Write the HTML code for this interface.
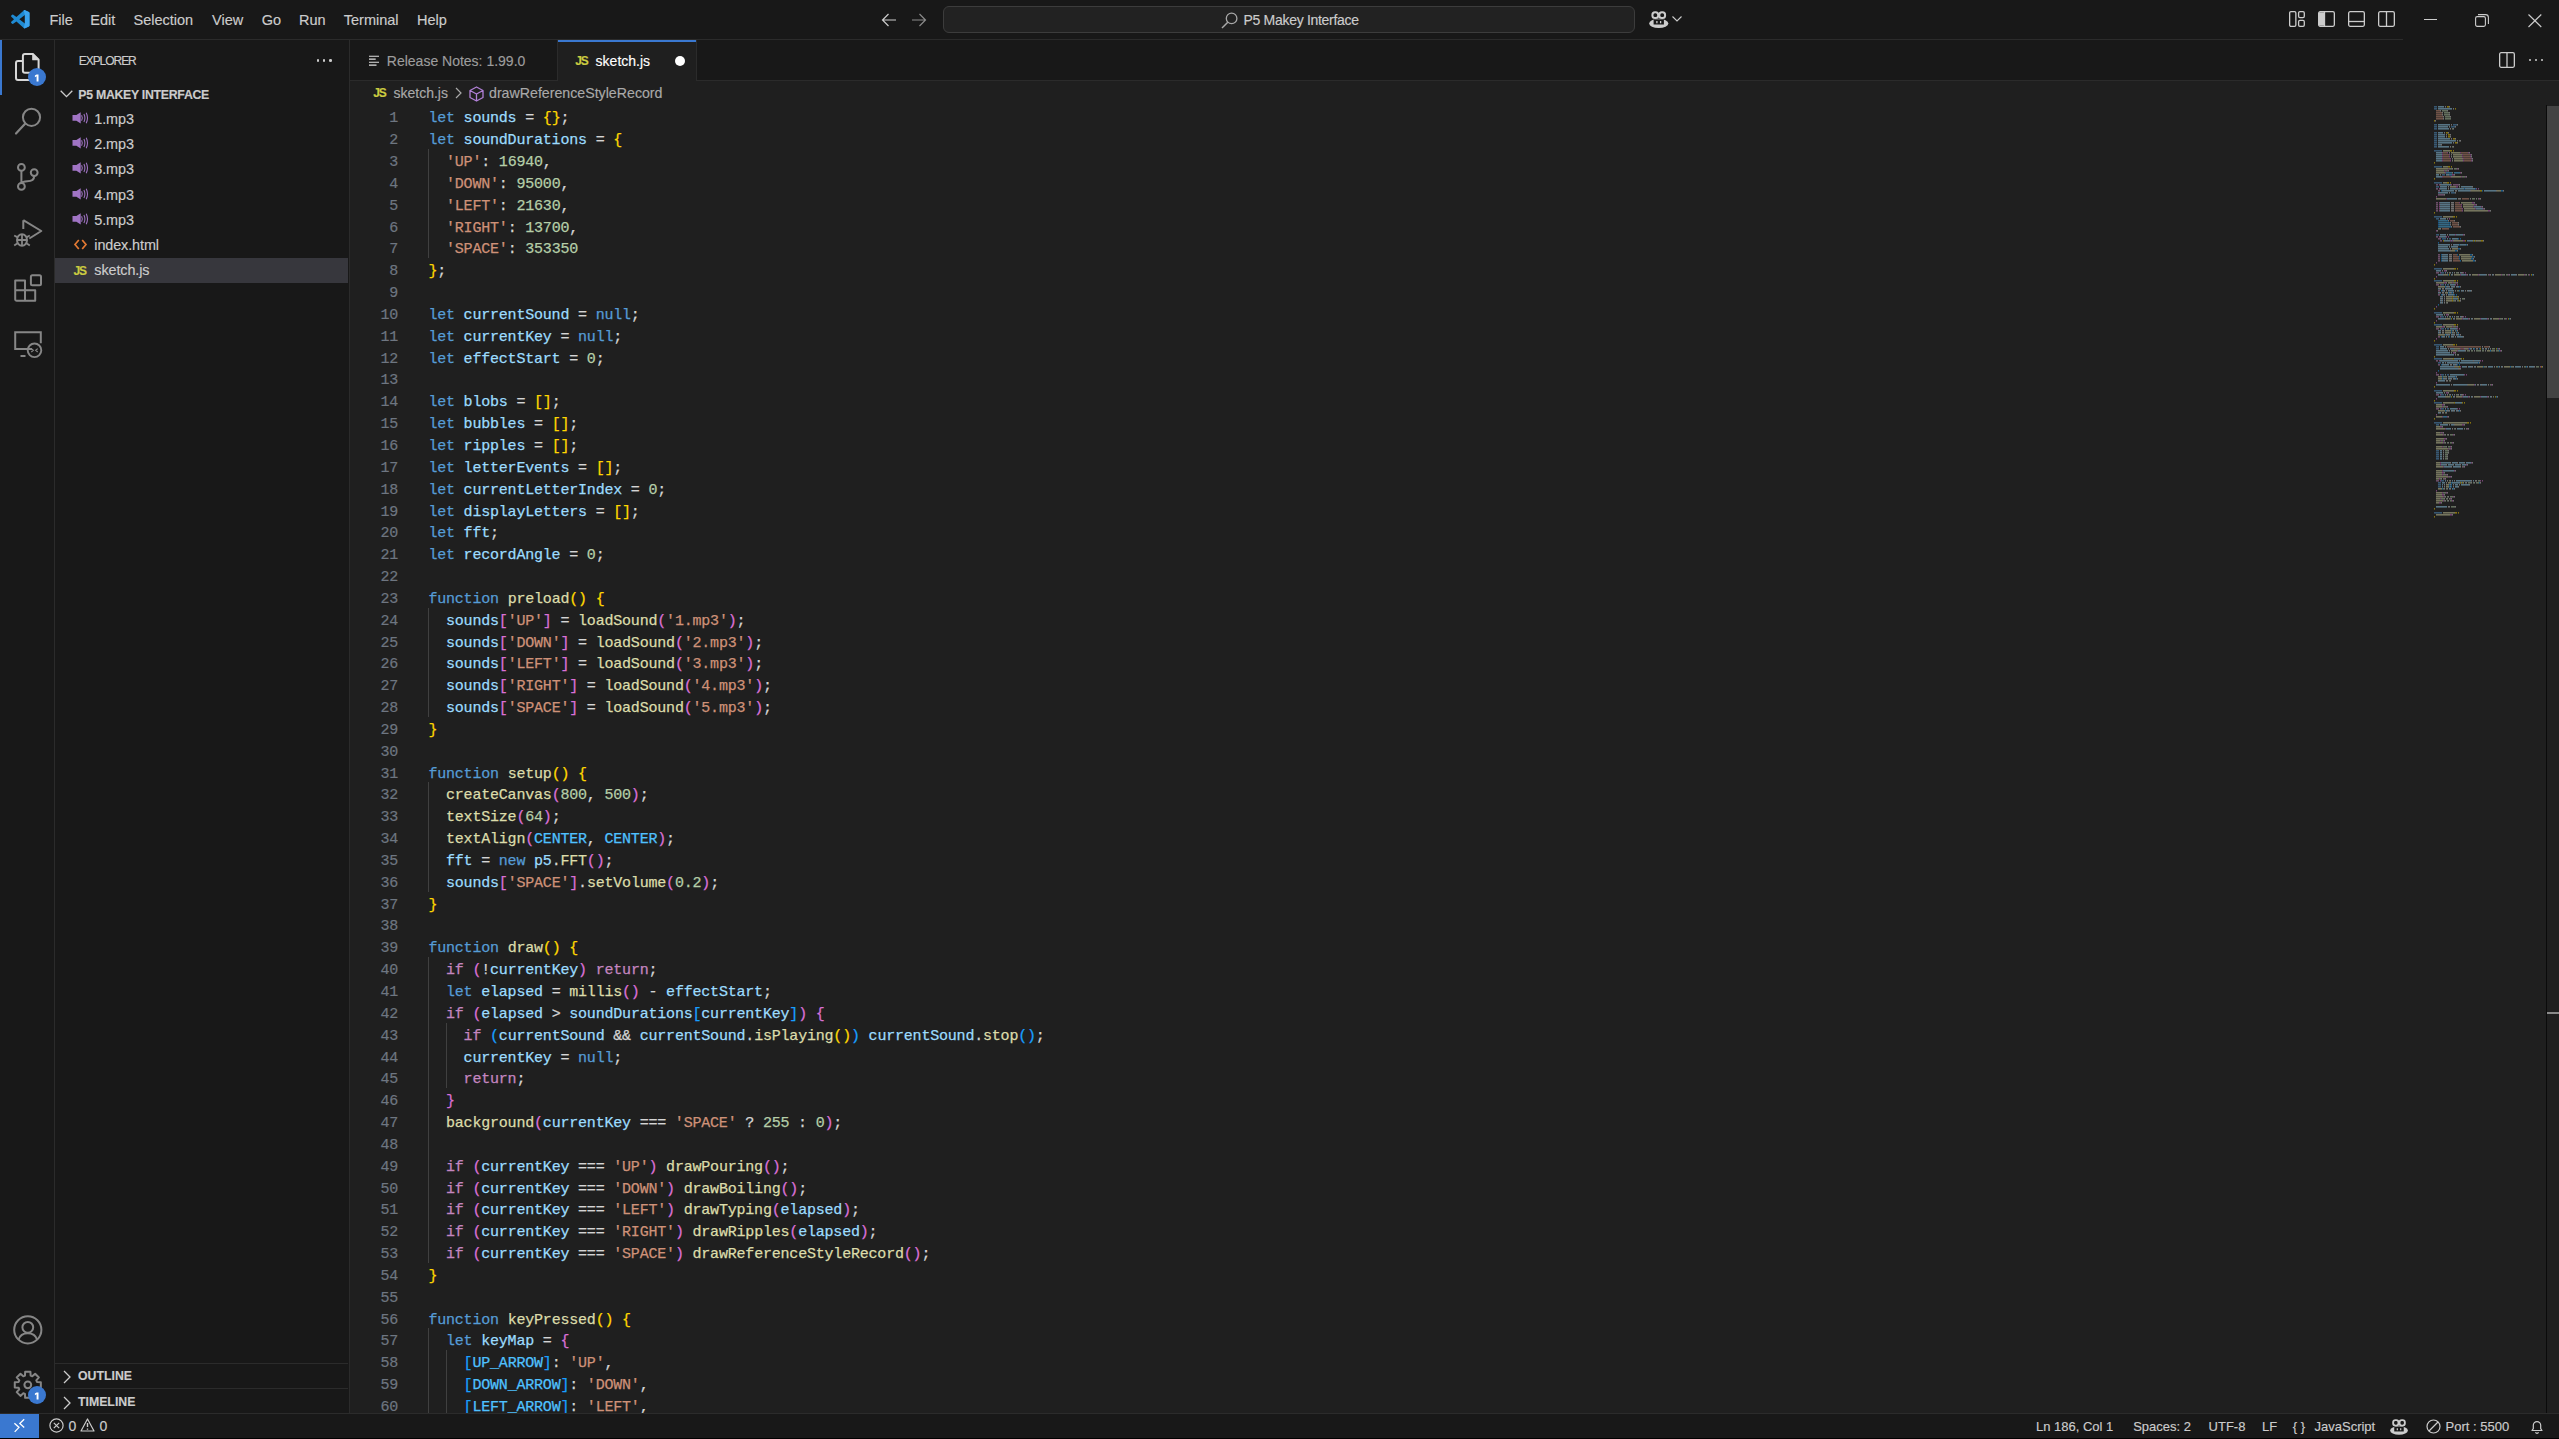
<!DOCTYPE html>
<html><head><meta charset="utf-8">
<style>
*{margin:0;padding:0;box-sizing:border-box}
html,body{width:2559px;height:1439px;overflow:hidden;background:#1f1f1f}
body{position:relative;font-family:"Liberation Sans",sans-serif;color:#cccccc}
.a{position:absolute}
.t{position:absolute;white-space:pre;-webkit-text-stroke:0.15px currentColor}
#titlebar{left:0;top:0;width:2559px;height:40px;background:#181818}
#titlebor{left:0;top:39px;width:2403px;height:1px;background:#2b2b2b}
#activity{left:0;top:40px;width:55px;height:1373px;background:#181818;border-right:1px solid #2b2b2b}
#sidebar{left:55px;top:40px;width:294px;height:1373px;background:#181818}
#sidebor{left:349px;top:40px;width:1px;height:1373px;background:#2b2b2b}
#tabbar{left:350px;top:40px;width:2209px;height:40px;background:#181818}
#tabbor{left:350px;top:80px;width:2209px;height:1px;background:#2b2b2b}
#editor{left:350px;top:81px;width:2209px;height:1332px;background:#1f1f1f}
#status{left:0;top:1413px;width:2559px;height:26px;background:#181818;border-top:1px solid #2b2b2b}
.ln{position:absolute;-webkit-text-stroke:0.2px currentColor;left:350px;width:48px;text-align:right;font-family:"Liberation Mono",monospace;font-size:15px;letter-spacing:-0.2px;line-height:21.84px;height:21.84px;color:#6e7681;white-space:pre}
.cl{position:absolute;left:428.4px;-webkit-text-stroke:0.25px currentColor;font-family:"Liberation Mono",monospace;font-size:15px;letter-spacing:-0.2px;line-height:21.84px;height:21.84px;white-space:pre;color:#d4d4d4}
.k{color:#569cd6}.c{color:#c586c0}.v{color:#9cdcfe}.f{color:#dcdcaa}.s{color:#ce9178}.n{color:#b5cea8}.o{color:#d4d4d4}.K{color:#4fc1ff}
.b1{color:#ffd700}.b2{color:#da70d6}.b3{color:#179fff}
svg{position:absolute;overflow:visible}
</style></head><body>
<div id="titlebar" class="a"></div>
<div id="titlebor" class="a"></div>
<div id="activity" class="a"></div>
<div id="sidebar" class="a"></div>
<div id="sidebor" class="a"></div>
<div id="tabbar" class="a"></div>
<div id="tabbor" class="a"></div>
<div id="editor" class="a"></div>
<div id="status" class="a"></div>
<svg style="left:11.00px;top:10.00px;" width="18.50" height="18.50" viewBox="0 0 100 100"><path fill="#1f8ad2" d="M96.5 10.8L75.9.9c-2.4-1.2-5.2-.7-7.1 1.2L29.4 38.1 12.2 25.1c-1.6-1.2-3.8-1.1-5.3.2l-5.5 5c-1.8 1.7-1.8 4.5 0 6.2L16.3 50 1.4 63.5c-1.8 1.7-1.8 4.5 0 6.2l5.5 5c1.5 1.3 3.7 1.4 5.3.2l17.2-13 39.4 36c1.9 1.9 4.7 2.4 7.1 1.2l20.6-9.9c2.2-1 3.5-3.2 3.5-5.6V16.4c0-2.4-1.4-4.6-3.5-5.6zM75 72.7L45.1 50 75 27.3v45.4z"/><path fill="#3aa3ee" d="M96.5 10.8L75.9.9c-2.4-1.2-5.2-.7-7.1 1.2L68.8 2.1 75 27.3v45.4l-6.2 25.2c1.9 1.9 4.7 2.4 7.1 1.2l20.6-9.9c2.2-1 3.5-3.2 3.5-5.6V16.4c0-2.4-1.4-4.6-3.5-5.6z"/></svg>
<div class="t" style="left:49.50px;top:12.73px;font-size:14.50px;line-height:14.50px;color:#cccccc;font-weight:400;letter-spacing:0.00px;font-family:'Liberation Sans',sans-serif;">File</div>
<div class="t" style="left:90.30px;top:12.73px;font-size:14.50px;line-height:14.50px;color:#cccccc;font-weight:400;letter-spacing:0.00px;font-family:'Liberation Sans',sans-serif;">Edit</div>
<div class="t" style="left:133.50px;top:12.73px;font-size:14.50px;line-height:14.50px;color:#cccccc;font-weight:400;letter-spacing:0.00px;font-family:'Liberation Sans',sans-serif;">Selection</div>
<div class="t" style="left:212.00px;top:12.73px;font-size:14.50px;line-height:14.50px;color:#cccccc;font-weight:400;letter-spacing:0.00px;font-family:'Liberation Sans',sans-serif;">View</div>
<div class="t" style="left:261.80px;top:12.73px;font-size:14.50px;line-height:14.50px;color:#cccccc;font-weight:400;letter-spacing:0.00px;font-family:'Liberation Sans',sans-serif;">Go</div>
<div class="t" style="left:299.00px;top:12.73px;font-size:14.50px;line-height:14.50px;color:#cccccc;font-weight:400;letter-spacing:0.00px;font-family:'Liberation Sans',sans-serif;">Run</div>
<div class="t" style="left:343.80px;top:12.73px;font-size:14.50px;line-height:14.50px;color:#cccccc;font-weight:400;letter-spacing:0.00px;font-family:'Liberation Sans',sans-serif;">Terminal</div>
<div class="t" style="left:417.00px;top:12.73px;font-size:14.50px;line-height:14.50px;color:#cccccc;font-weight:400;letter-spacing:0.00px;font-family:'Liberation Sans',sans-serif;">Help</div>
<svg style="left:881.00px;top:13.00px;" width="16.00" height="14.00" viewBox="0 0 16 14"><path d="M1.5 7H15M7.5 1L1.5 7l6 6" stroke="#cccccc" stroke-width="1.2" fill="none"/></svg>
<svg style="left:911.00px;top:13.00px;" width="16.00" height="14.00" viewBox="0 0 16 14"><path d="M1 7h13.5M8.5 1l6 6-6 6" stroke="#8b8b8b" stroke-width="1.2" fill="none"/></svg>
<div class="a" style="left:943px;top:6px;width:692px;height:27px;border:1px solid #3c3c3c;border-radius:6px;background:#222222"></div>
<svg style="left:1221.00px;top:12.00px;" width="17.00" height="17.00" viewBox="0 0 17 17"><circle cx="10.6" cy="6.4" r="5.3" stroke="#a8a8a8" stroke-width="1.3" fill="none"/><path d="M6.8 10.2L1 16" stroke="#a8a8a8" stroke-width="1.5" fill="none"/></svg>
<div class="t" style="left:1243.50px;top:13.15px;font-size:14.00px;line-height:14.00px;color:#cccccc;font-weight:400;letter-spacing:-0.30px;font-family:'Liberation Sans',sans-serif;">P5 Makey Interface</div>
<svg style="left:1648.50px;top:10.50px;" width="19.50" height="17.00" viewBox="0 0 19.5 17"><ellipse cx="9.75" cy="12.4" rx="9.6" ry="4.6" fill="#cccccc"/><rect x="4.6" y="8.3" width="10.3" height="5.2" fill="#181818"/><path d="M7.9 10v2.3M11.6 10v2.3" stroke="#cccccc" stroke-width="1.3"/><rect x="3.4" y="1.3" width="5.8" height="5.8" rx="2.6" stroke="#cccccc" stroke-width="2" fill="none"/><rect x="10.3" y="1.3" width="5.8" height="5.8" rx="2.6" stroke="#cccccc" stroke-width="2" fill="none"/></svg>
<svg style="left:1672.00px;top:16.00px;" width="10.00" height="6.00" viewBox="0 0 10 6"><path d="M.5.5L5 5 9.5.5" stroke="#cccccc" stroke-width="1.1" fill="none"/></svg>
<svg style="left:2289.00px;top:11.00px;" width="16.00" height="16.00" viewBox="0 0 16 16"><rect x="0.65" y="0.65" width="6.2" height="14.7" rx="1.3" stroke="#cccccc" stroke-width="1.3" fill="none"/><rect x="9.6" y="0.65" width="5.7" height="5.9" rx="1.3" stroke="#cccccc" stroke-width="1.3" fill="none"/><rect x="9.6" y="9.45" width="5.7" height="5.9" rx="1.3" stroke="#cccccc" stroke-width="1.3" fill="none"/></svg>
<svg style="left:2318.00px;top:11.00px;" width="17.00" height="16.00" viewBox="0 0 17 16"><rect x="0.65" y="0.65" width="15.7" height="14.7" rx="1.5" stroke="#cccccc" stroke-width="1.3" fill="none"/><path d="M1 1.3h5.5v13.4H1z" fill="#cccccc"/><path d="M6.5 1v14" stroke="#cccccc" stroke-width="1.3"/></svg>
<svg style="left:2348.00px;top:11.00px;" width="17.00" height="16.00" viewBox="0 0 17 16"><rect x="0.65" y="0.65" width="15.7" height="14.7" rx="1.5" stroke="#cccccc" stroke-width="1.3" fill="none"/><path d="M1 10.5h15" stroke="#cccccc" stroke-width="1.3"/></svg>
<svg style="left:2378.00px;top:11.00px;" width="17.00" height="16.00" viewBox="0 0 17 16"><rect x="0.65" y="0.65" width="15.7" height="14.7" rx="1.5" stroke="#cccccc" stroke-width="1.3" fill="none"/><path d="M8.5 1v14" stroke="#cccccc" stroke-width="1.3"/></svg>
<div class="a" style="left:2424.00px;top:19.00px;width:12.50px;height:1.20px;background:#cccccc;"></div>
<svg style="left:2475.00px;top:14.00px;" width="14.00" height="13.00" viewBox="0 0 14 13"><rect x="0.6" y="2.6" width="9.8" height="9.8" rx="1.6" stroke="#cccccc" stroke-width="1.1" fill="none"/><path d="M3 .6h7.5a2.9 2.9 0 0 1 2.9 2.9V10" stroke="#cccccc" stroke-width="1.1" fill="none"/></svg>
<svg style="left:2528.00px;top:13.50px;" width="14.00" height="13.00" viewBox="0 0 14 13"><path d="M.5.5l12.8 12.5M13.3.5L.5 13" stroke="#cccccc" stroke-width="1.15" fill="none"/></svg>
<div class="a" style="left:0.00px;top:40.00px;width:2.00px;height:55.00px;background:#3a78d0;"></div>
<svg style="left:14.00px;top:52.00px;" width="28.00" height="30.00" viewBox="0 0 28 30"><path d="M10.9 1.9H18.8L24.6 7.7V18.75A2 2 0 0 1 22.6 20.75H10.9A2 2 0 0 1 8.9 18.75V3.9A2 2 0 0 1 10.9 1.9z" stroke="#d7d7d7" stroke-width="2" fill="none" stroke-linejoin="round"/><path d="M18.8 2v5.7h5.7z" fill="#d7d7d7" stroke="#d7d7d7" stroke-width="1.2" stroke-linejoin="round"/><path d="M8.9 9H4A2 2 0 0 0 2 11V26A2 2 0 0 0 4 28H17" stroke="#d7d7d7" stroke-width="2" fill="none" stroke-linejoin="round"/></svg>
<div class="a" style="left:28.1px;top:68.1px;width:18px;height:18px;border-radius:50%;background:#3a78d0"></div>
<svg style="left:34.00px;top:74.00px;" width="6.00" height="8.00" viewBox="0 0 6 8"><path d="M2.6 .6h1.9v6.9H2.6V2.3L.9 3.2V1.6z" fill="#ffffff"/></svg>
<svg style="left:14.00px;top:106.00px;" width="30.00" height="31.00" viewBox="0 0 30 31"><circle cx="17.5" cy="11.3" r="8.6" stroke="#868686" stroke-width="2" fill="none"/><path d="M11.3 17.6L2 27.5" stroke="#868686" stroke-width="2.2" fill="none" stroke-linecap="round"/></svg>
<svg style="left:14.00px;top:161.00px;" width="28.00" height="32.00" viewBox="0 0 28 32"><circle cx="7.4" cy="6.4" r="3.4" stroke="#868686" stroke-width="2" fill="none"/><circle cx="7.4" cy="25.4" r="3.4" stroke="#868686" stroke-width="2" fill="none"/><circle cx="20.2" cy="11.6" r="3.4" stroke="#868686" stroke-width="2" fill="none"/><path d="M7.4 9.8v12.2M20.2 15c0 4-3 5.2-7 5.2-3 0-5 .8-5.8 2.3" stroke="#868686" stroke-width="2" fill="none"/></svg>
<svg style="left:13.00px;top:218.00px;" width="30.00" height="30.00" viewBox="0 0 30 30"><path d="M10.3 2.2v8.7M10.3 2.2L28.3 13l-12 7.5" stroke="#868686" stroke-width="2" fill="none" stroke-linejoin="round"/><ellipse cx="9" cy="22" rx="5" ry="5.8" stroke="#868686" stroke-width="2" fill="none"/><path d="M4 22h10M1.2 17.5l3 1.6M16.8 17.5l-3 1.6M1.2 27.5l3-2M16.8 27.5l-3-2M9 16.5v11" stroke="#868686" stroke-width="1.8" fill="none"/></svg>
<svg style="left:13.00px;top:273.00px;" width="30.00" height="30.00" viewBox="0 0 30 30"><rect x="17.9" y="2.3" width="10.1" height="10" rx="1.5" stroke="#868686" stroke-width="2" fill="none"/><path d="M2.2 7.6h9.8v9.7h10.2v10.4H3.7a1.5 1.5 0 0 1-1.5-1.5z" stroke="#868686" stroke-width="2" fill="none" stroke-linejoin="round"/><path d="M2.2 17.3H12v10.4" stroke="#868686" stroke-width="2" fill="none"/></svg>
<svg style="left:13.00px;top:330.00px;" width="30.00" height="29.00" viewBox="0 0 30 29"><path d="M19 19H2.2V2.3h25.6v11" stroke="#868686" stroke-width="2" fill="none"/><path d="M7.5 26h5" stroke="#868686" stroke-width="2"/><circle cx="21.5" cy="20.3" r="6.8" stroke="#868686" stroke-width="1.9" fill="none"/><path d="M18.3 18.6l2 1.7-2 1.7M24.7 18.6l-2 1.7 2 1.7" stroke="#868686" stroke-width="1.2" fill="none"/></svg>
<svg style="left:13.00px;top:1315.00px;" width="30.00" height="30.00" viewBox="0 0 30 30"><circle cx="14.8" cy="14.8" r="13.6" stroke="#868686" stroke-width="2" fill="none"/><circle cx="14.8" cy="12.3" r="5.4" stroke="#868686" stroke-width="2" fill="none"/><path d="M5.5 24.8c1.3-4.3 5-6.5 9.3-6.5s8 2.2 9.3 6.5" stroke="#868686" stroke-width="2" fill="none"/></svg>
<svg style="left:13.00px;top:1370.00px;" width="30.00" height="30.00" viewBox="0 0 30 30"><path d="M27.83 12.16 L27.83 17.44 L23.97 17.64 L23.29 19.28 L25.89 22.15 L22.15 25.89 L19.28 23.29 L17.64 23.97 L17.44 27.83 L12.16 27.83 L11.96 23.97 L10.32 23.29 L7.45 25.89 L3.71 22.15 L6.31 19.28 L5.63 17.64 L1.77 17.44 L1.77 12.16 L5.63 11.96 L6.31 10.32 L3.71 7.45 L7.45 3.71 L10.32 6.31 L11.96 5.63 L12.16 1.77 L17.44 1.77 L17.64 5.63 L19.28 6.31 L22.15 3.71 L25.89 7.45 L23.29 10.32 L23.97 11.96Z" stroke="#868686" stroke-width="2" fill="none" stroke-linejoin="round"/><circle cx="14.8" cy="14.8" r="3.4" stroke="#868686" stroke-width="2" fill="none"/></svg>
<div class="a" style="left:28px;top:1386px;width:18px;height:18px;border-radius:50%;background:#3a78d0"></div>
<svg style="left:33.80px;top:1392.00px;" width="6.00" height="8.00" viewBox="0 0 6 8"><path d="M2.6 .6h1.9v6.9H2.6V2.3L.9 3.2V1.6z" fill="#ffffff"/></svg>
<div class="t" style="left:78.75px;top:54.84px;font-size:12.00px;line-height:12.00px;color:#cccccc;font-weight:400;letter-spacing:-1.05px;font-family:'Liberation Sans',sans-serif;">EXPLORER</div>
<div class="a" style="left:316.5px;top:59px;width:2.6px;height:2.6px;border-radius:50%;background:#cccccc"></div>
<div class="a" style="left:322.8px;top:59px;width:2.6px;height:2.6px;border-radius:50%;background:#cccccc"></div>
<div class="a" style="left:329.1px;top:59px;width:2.6px;height:2.6px;border-radius:50%;background:#cccccc"></div>
<svg style="left:60.00px;top:89.50px;" width="13.00" height="8.00" viewBox="0 0 13 8"><path d="M.7.7L6.5 6.6 12.3.7" stroke="#cccccc" stroke-width="1.3" fill="none"/></svg>
<div class="t" style="left:78.30px;top:88.59px;font-size:12.30px;line-height:12.30px;color:#cccccc;font-weight:700;letter-spacing:-0.28px;font-family:'Liberation Sans',sans-serif;">P5 MAKEY INTERFACE</div>
<div class="a" style="left:55.00px;top:258.00px;width:293.00px;height:25.00px;background:#37373d;"></div>
<div class="t" style="left:94.30px;top:112.01px;font-size:14.40px;line-height:14.40px;color:#cccccc;font-weight:400;letter-spacing:-0.10px;font-family:'Liberation Sans',sans-serif;">1.mp3</div>
<svg style="left:66.00px;top:105.00px;" width="34.00" height="26.00" viewBox="0 0 34 26"><path d="M6.5 10.1h3.9l4.3-2.9v11.4l-4.3-2.9H6.5z" fill="#a074c4"/><path d="M15.6 10.3q1.4 2.7 0 5.4M17.9 9q2 4 0 8M20.2 7.8q2.6 5.2 0 10.4" stroke="#a074c4" stroke-width="1.05" fill="none"/></svg>
<div class="t" style="left:94.30px;top:137.21px;font-size:14.40px;line-height:14.40px;color:#cccccc;font-weight:400;letter-spacing:-0.10px;font-family:'Liberation Sans',sans-serif;">2.mp3</div>
<svg style="left:66.00px;top:130.20px;" width="34.00" height="26.00" viewBox="0 0 34 26"><path d="M6.5 10.1h3.9l4.3-2.9v11.4l-4.3-2.9H6.5z" fill="#a074c4"/><path d="M15.6 10.3q1.4 2.7 0 5.4M17.9 9q2 4 0 8M20.2 7.8q2.6 5.2 0 10.4" stroke="#a074c4" stroke-width="1.05" fill="none"/></svg>
<div class="t" style="left:94.30px;top:162.41px;font-size:14.40px;line-height:14.40px;color:#cccccc;font-weight:400;letter-spacing:-0.10px;font-family:'Liberation Sans',sans-serif;">3.mp3</div>
<svg style="left:66.00px;top:155.40px;" width="34.00" height="26.00" viewBox="0 0 34 26"><path d="M6.5 10.1h3.9l4.3-2.9v11.4l-4.3-2.9H6.5z" fill="#a074c4"/><path d="M15.6 10.3q1.4 2.7 0 5.4M17.9 9q2 4 0 8M20.2 7.8q2.6 5.2 0 10.4" stroke="#a074c4" stroke-width="1.05" fill="none"/></svg>
<div class="t" style="left:94.30px;top:187.61px;font-size:14.40px;line-height:14.40px;color:#cccccc;font-weight:400;letter-spacing:-0.10px;font-family:'Liberation Sans',sans-serif;">4.mp3</div>
<svg style="left:66.00px;top:180.60px;" width="34.00" height="26.00" viewBox="0 0 34 26"><path d="M6.5 10.1h3.9l4.3-2.9v11.4l-4.3-2.9H6.5z" fill="#a074c4"/><path d="M15.6 10.3q1.4 2.7 0 5.4M17.9 9q2 4 0 8M20.2 7.8q2.6 5.2 0 10.4" stroke="#a074c4" stroke-width="1.05" fill="none"/></svg>
<div class="t" style="left:94.30px;top:212.81px;font-size:14.40px;line-height:14.40px;color:#cccccc;font-weight:400;letter-spacing:-0.10px;font-family:'Liberation Sans',sans-serif;">5.mp3</div>
<svg style="left:66.00px;top:205.80px;" width="34.00" height="26.00" viewBox="0 0 34 26"><path d="M6.5 10.1h3.9l4.3-2.9v11.4l-4.3-2.9H6.5z" fill="#a074c4"/><path d="M15.6 10.3q1.4 2.7 0 5.4M17.9 9q2 4 0 8M20.2 7.8q2.6 5.2 0 10.4" stroke="#a074c4" stroke-width="1.05" fill="none"/></svg>
<div class="t" style="left:94.30px;top:238.01px;font-size:14.40px;line-height:14.40px;color:#cccccc;font-weight:400;letter-spacing:-0.10px;font-family:'Liberation Sans',sans-serif;">index.html</div>
<svg style="left:74.00px;top:239.20px;" width="13.00" height="11.00" viewBox="0 0 13 11"><path d="M4.8 1L1 5.5 4.8 10M8.2 1L12 5.5 8.2 10" stroke="#e37933" stroke-width="1.7" fill="none"/></svg>
<div class="t" style="left:94.30px;top:263.21px;font-size:14.40px;line-height:14.40px;color:#cccccc;font-weight:400;letter-spacing:-0.10px;font-family:'Liberation Sans',sans-serif;">sketch.js</div>
<div class="t" style="left:73.60px;top:264.84px;font-size:12.00px;line-height:12.00px;color:#cbcb41;font-weight:700;letter-spacing:-1.20px;font-family:'Liberation Sans',sans-serif;">JS</div>
<div class="a" style="left:55.00px;top:1363.00px;width:293.00px;height:1.00px;background:#2b2b2b;"></div>
<svg style="left:63.00px;top:1370.00px;" width="8.00" height="14.00" viewBox="0 0 8 14"><path d="M1 1l6 6-6 6" stroke="#cccccc" stroke-width="1.3" fill="none"/></svg>
<div class="t" style="left:78.00px;top:1370.09px;font-size:12.30px;line-height:12.30px;color:#cccccc;font-weight:700;letter-spacing:0.00px;font-family:'Liberation Sans',sans-serif;">OUTLINE</div>
<div class="a" style="left:55.00px;top:1388.00px;width:293.00px;height:1.00px;background:#2b2b2b;"></div>
<svg style="left:63.00px;top:1396.00px;" width="8.00" height="14.00" viewBox="0 0 8 14"><path d="M1 1l6 6-6 6" stroke="#cccccc" stroke-width="1.3" fill="none"/></svg>
<div class="t" style="left:78.00px;top:1395.89px;font-size:12.30px;line-height:12.30px;color:#cccccc;font-weight:700;letter-spacing:0.00px;font-family:'Liberation Sans',sans-serif;">TIMELINE</div>
<svg style="left:368.50px;top:54.50px;" width="11.00" height="11.00" viewBox="0 0 11 11"><path d="M0 1.2h10M0 4.1h6.7M0 7.2h10M0 10.1h7.5" stroke="#e0e0e0" stroke-width="1.1"/></svg>
<div class="t" style="left:386.80px;top:54.15px;font-size:14.00px;line-height:14.00px;color:#9d9d9d;font-weight:400;letter-spacing:0.00px;font-family:'Liberation Sans',sans-serif;">Release Notes: 1.99.0</div>
<div class="a" style="left:557.50px;top:40.00px;width:138.00px;height:41.00px;background:#1f1f1f;"></div>
<div class="a" style="left:557.50px;top:40.00px;width:138.00px;height:1.50px;background:#3a78d0;"></div>
<div class="a" style="left:695.50px;top:40.00px;width:1.00px;height:40.00px;background:#2b2b2b;"></div>
<div class="a" style="left:557.00px;top:40.00px;width:1.00px;height:40.00px;background:#2b2b2b;"></div>
<div class="t" style="left:575.30px;top:54.64px;font-size:12.00px;line-height:12.00px;color:#cbcb41;font-weight:700;letter-spacing:-1.20px;font-family:'Liberation Sans',sans-serif;">JS</div>
<div class="t" style="left:595.60px;top:54.15px;font-size:14.00px;line-height:14.00px;color:#ffffff;font-weight:400;letter-spacing:0.00px;font-family:'Liberation Sans',sans-serif;">sketch.js</div>
<div class="a" style="left:674.5px;top:55.5px;width:10px;height:10px;border-radius:50%;background:#ffffff"></div>
<svg style="left:2498.50px;top:51.50px;" width="16.00" height="16.00" viewBox="0 0 16 16"><rect x="0.65" y="0.65" width="14.7" height="14.7" rx="1.5" stroke="#cccccc" stroke-width="1.3" fill="none"/><path d="M8 1v14" stroke="#cccccc" stroke-width="1.3"/></svg>
<div class="a" style="left:2528.5px;top:58.6px;width:2.6px;height:2.6px;border-radius:50%;background:#cccccc"></div>
<div class="a" style="left:2534.5px;top:58.6px;width:2.6px;height:2.6px;border-radius:50%;background:#cccccc"></div>
<div class="a" style="left:2540.5px;top:58.6px;width:2.6px;height:2.6px;border-radius:50%;background:#cccccc"></div>
<div class="t" style="left:373.20px;top:87.44px;font-size:12.00px;line-height:12.00px;color:#cbcb41;font-weight:700;letter-spacing:-1.20px;font-family:'Liberation Sans',sans-serif;">JS</div>
<div class="t" style="left:393.50px;top:86.35px;font-size:14.00px;line-height:14.00px;color:#a9a9a9;font-weight:400;letter-spacing:0.00px;font-family:'Liberation Sans',sans-serif;">sketch.js</div>
<svg style="left:455.00px;top:86.50px;" width="7.00" height="12.00" viewBox="0 0 7 12"><path d="M1 1l5 5-5 5" stroke="#a9a9a9" stroke-width="1.2" fill="none"/></svg>
<svg style="left:469.00px;top:85.50px;" width="15.00" height="16.00" viewBox="0 0 15 16"><path d="M7.5 1L14 4.5v7L7.5 15 1 11.5v-7z M1 4.5L7.5 8 14 4.5M7.5 8v7" stroke="#b180d7" stroke-width="1.3" fill="none" stroke-linejoin="round"/></svg>
<div class="t" style="left:489.00px;top:86.18px;font-size:14.20px;line-height:14.20px;color:#a9a9a9;font-weight:400;letter-spacing:0.00px;font-family:'Liberation Sans',sans-serif;">drawReferenceStyleRecord</div>
<div class="a" style="left:0.00px;top:1414.00px;width:39.00px;height:25.00px;background:#3a78d0;"></div>
<svg style="left:0.00px;top:1408.00px;" width="40.00" height="31.00" viewBox="0 0 40 31"><path d="M14.4 15.3l4.6 4.1-4.3 4.5M24.2 11.2l-4.4 4.3 4.4 4.1" stroke="#ffffff" stroke-width="1.3" fill="none"/></svg>
<svg style="left:48.50px;top:1418.00px;" width="15.00" height="15.00" viewBox="0 0 15 15"><circle cx="7.5" cy="7.5" r="6.6" stroke="#cccccc" stroke-width="1.2" fill="none"/><path d="M4.8 4.8l5.4 5.4M10.2 4.8l-5.4 5.4" stroke="#cccccc" stroke-width="1.2"/></svg>
<div class="t" style="left:68.50px;top:1419.15px;font-size:14.00px;line-height:14.00px;color:#cccccc;font-weight:400;letter-spacing:-0.50px;font-family:'Liberation Sans',sans-serif;">0</div>
<svg style="left:80.00px;top:1418.00px;" width="15.00" height="14.00" viewBox="0 0 15 14"><path d="M7.5 1L14 13H1z" stroke="#cccccc" stroke-width="1.2" fill="none" stroke-linejoin="round"/><path d="M7.5 5v4M7.5 10.5v1.3" stroke="#cccccc" stroke-width="1.4"/></svg>
<div class="t" style="left:99.40px;top:1419.15px;font-size:14.00px;line-height:14.00px;color:#cccccc;font-weight:400;letter-spacing:-0.50px;font-family:'Liberation Sans',sans-serif;">0</div>
<div class="t" style="left:2036.00px;top:1420.00px;font-size:13.00px;line-height:13.00px;color:#cccccc;font-weight:400;letter-spacing:0.00px;font-family:'Liberation Sans',sans-serif;">Ln 186, Col 1</div>
<div class="t" style="left:2133.20px;top:1420.00px;font-size:13.00px;line-height:13.00px;color:#cccccc;font-weight:400;letter-spacing:0.00px;font-family:'Liberation Sans',sans-serif;">Spaces: 2</div>
<div class="t" style="left:2208.60px;top:1420.00px;font-size:13.00px;line-height:13.00px;color:#cccccc;font-weight:400;letter-spacing:0.00px;font-family:'Liberation Sans',sans-serif;">UTF-8</div>
<div class="t" style="left:2262.00px;top:1420.00px;font-size:13.00px;line-height:13.00px;color:#cccccc;font-weight:400;letter-spacing:0.00px;font-family:'Liberation Sans',sans-serif;">LF</div>
<div class="t" style="left:2292.70px;top:1420.00px;font-size:13.00px;line-height:13.00px;color:#cccccc;font-weight:400;letter-spacing:0.00px;font-family:'Liberation Sans',sans-serif;">{ }</div>
<div class="t" style="left:2314.50px;top:1420.00px;font-size:13.00px;line-height:13.00px;color:#cccccc;font-weight:400;letter-spacing:0.00px;font-family:'Liberation Sans',sans-serif;">JavaScript</div>
<div class="t" style="left:2445.60px;top:1420.00px;font-size:13.00px;line-height:13.00px;color:#cccccc;font-weight:400;letter-spacing:0.00px;font-family:'Liberation Sans',sans-serif;">Port : 5500</div>
<svg style="left:2389.50px;top:1418.50px;" width="18.00" height="15.70" viewBox="0 0 19.5 17"><ellipse cx="9.75" cy="12.4" rx="9.6" ry="4.6" fill="#cccccc"/><rect x="4.6" y="8.3" width="10.3" height="5.2" fill="#181818"/><path d="M7.9 10v2.3M11.6 10v2.3" stroke="#cccccc" stroke-width="1.3"/><rect x="3.4" y="1.3" width="5.8" height="5.8" rx="2.6" stroke="#cccccc" stroke-width="2" fill="none"/><rect x="10.3" y="1.3" width="5.8" height="5.8" rx="2.6" stroke="#cccccc" stroke-width="2" fill="none"/></svg>
<svg style="left:2425.50px;top:1419.00px;" width="15.00" height="15.00" viewBox="0 0 15 15"><circle cx="7.5" cy="7.5" r="6.5" stroke="#cccccc" stroke-width="1.2" fill="none"/><path d="M3 12L12 3" stroke="#cccccc" stroke-width="1.2"/></svg>
<svg style="left:2530.00px;top:1418.50px;" width="14.00" height="15.00" viewBox="0 0 14 15"><path d="M2 11.5h10l-1.3-1.8V6.3a3.7 3.7 0 0 0-7.4 0v3.4L2 11.5z" stroke="#cccccc" stroke-width="1.2" fill="none" stroke-linejoin="round"/><path d="M5.5 13.3a1.6 1.6 0 0 0 3 0" stroke="#cccccc" stroke-width="1.2" fill="none"/></svg>
<div class="a" style="left:2546.00px;top:105.00px;width:1.00px;height:1308.00px;background:#0b0b0b;"></div>
<div class="a" style="left:2547.00px;top:106.00px;width:12.00px;height:291.50px;background:#434343;"></div>
<div class="a" style="left:2547.00px;top:1011.80px;width:12.00px;height:2.00px;background:#8a8a8a;"></div>
<div class="a" style="left:0.00px;top:1438.00px;width:2559.00px;height:1.00px;background:#000000;"></div>
<svg style="left:0;top:0" width="2559" height="1439"><g opacity="0.45"><rect x="2434" y="106.0" width="3" height="1.6" fill="#569cd6"/><rect x="2438" y="106.0" width="6" height="1.6" fill="#9cdcfe"/><rect x="2445" y="106.0" width="1" height="1.6" fill="#d4d4d4"/><rect x="2447" y="106.0" width="2" height="1.6" fill="#ffd700"/><rect x="2449" y="106.0" width="1" height="1.6" fill="#d4d4d4"/><rect x="2434" y="108.0" width="3" height="1.6" fill="#569cd6"/><rect x="2438" y="108.0" width="14" height="1.6" fill="#9cdcfe"/><rect x="2453" y="108.0" width="1" height="1.6" fill="#d4d4d4"/><rect x="2455" y="108.0" width="1" height="1.6" fill="#ffd700"/><rect x="2436" y="110.0" width="4" height="1.6" fill="#ce9178"/><rect x="2440" y="110.0" width="1" height="1.6" fill="#d4d4d4"/><rect x="2442" y="110.0" width="5" height="1.6" fill="#b5cea8"/><rect x="2447" y="110.0" width="1" height="1.6" fill="#d4d4d4"/><rect x="2436" y="112.0" width="6" height="1.6" fill="#ce9178"/><rect x="2442" y="112.0" width="1" height="1.6" fill="#d4d4d4"/><rect x="2444" y="112.0" width="5" height="1.6" fill="#b5cea8"/><rect x="2449" y="112.0" width="1" height="1.6" fill="#d4d4d4"/><rect x="2436" y="114.0" width="6" height="1.6" fill="#ce9178"/><rect x="2442" y="114.0" width="1" height="1.6" fill="#d4d4d4"/><rect x="2444" y="114.0" width="5" height="1.6" fill="#b5cea8"/><rect x="2449" y="114.0" width="1" height="1.6" fill="#d4d4d4"/><rect x="2436" y="116.0" width="7" height="1.6" fill="#ce9178"/><rect x="2443" y="116.0" width="1" height="1.6" fill="#d4d4d4"/><rect x="2445" y="116.0" width="5" height="1.6" fill="#b5cea8"/><rect x="2450" y="116.0" width="1" height="1.6" fill="#d4d4d4"/><rect x="2436" y="118.0" width="7" height="1.6" fill="#ce9178"/><rect x="2443" y="118.0" width="1" height="1.6" fill="#d4d4d4"/><rect x="2445" y="118.0" width="6" height="1.6" fill="#b5cea8"/><rect x="2434" y="120.0" width="1" height="1.6" fill="#ffd700"/><rect x="2435" y="120.0" width="1" height="1.6" fill="#d4d4d4"/><rect x="2434" y="124.0" width="3" height="1.6" fill="#569cd6"/><rect x="2438" y="124.0" width="12" height="1.6" fill="#9cdcfe"/><rect x="2451" y="124.0" width="1" height="1.6" fill="#d4d4d4"/><rect x="2453" y="124.0" width="4" height="1.6" fill="#569cd6"/><rect x="2457" y="124.0" width="1" height="1.6" fill="#d4d4d4"/><rect x="2434" y="126.0" width="3" height="1.6" fill="#569cd6"/><rect x="2438" y="126.0" width="10" height="1.6" fill="#9cdcfe"/><rect x="2449" y="126.0" width="1" height="1.6" fill="#d4d4d4"/><rect x="2451" y="126.0" width="4" height="1.6" fill="#569cd6"/><rect x="2455" y="126.0" width="1" height="1.6" fill="#d4d4d4"/><rect x="2434" y="128.0" width="3" height="1.6" fill="#569cd6"/><rect x="2438" y="128.0" width="11" height="1.6" fill="#9cdcfe"/><rect x="2450" y="128.0" width="1" height="1.6" fill="#d4d4d4"/><rect x="2452" y="128.0" width="1" height="1.6" fill="#b5cea8"/><rect x="2453" y="128.0" width="1" height="1.6" fill="#d4d4d4"/><rect x="2434" y="132.0" width="3" height="1.6" fill="#569cd6"/><rect x="2438" y="132.0" width="5" height="1.6" fill="#9cdcfe"/><rect x="2444" y="132.0" width="1" height="1.6" fill="#d4d4d4"/><rect x="2446" y="132.0" width="2" height="1.6" fill="#ffd700"/><rect x="2448" y="132.0" width="1" height="1.6" fill="#d4d4d4"/><rect x="2434" y="134.0" width="3" height="1.6" fill="#569cd6"/><rect x="2438" y="134.0" width="7" height="1.6" fill="#9cdcfe"/><rect x="2446" y="134.0" width="1" height="1.6" fill="#d4d4d4"/><rect x="2448" y="134.0" width="2" height="1.6" fill="#ffd700"/><rect x="2450" y="134.0" width="1" height="1.6" fill="#d4d4d4"/><rect x="2434" y="136.0" width="3" height="1.6" fill="#569cd6"/><rect x="2438" y="136.0" width="7" height="1.6" fill="#9cdcfe"/><rect x="2446" y="136.0" width="1" height="1.6" fill="#d4d4d4"/><rect x="2448" y="136.0" width="2" height="1.6" fill="#ffd700"/><rect x="2450" y="136.0" width="1" height="1.6" fill="#d4d4d4"/><rect x="2434" y="138.0" width="3" height="1.6" fill="#569cd6"/><rect x="2438" y="138.0" width="12" height="1.6" fill="#9cdcfe"/><rect x="2451" y="138.0" width="1" height="1.6" fill="#d4d4d4"/><rect x="2453" y="138.0" width="2" height="1.6" fill="#ffd700"/><rect x="2455" y="138.0" width="1" height="1.6" fill="#d4d4d4"/><rect x="2434" y="140.0" width="3" height="1.6" fill="#569cd6"/><rect x="2438" y="140.0" width="18" height="1.6" fill="#9cdcfe"/><rect x="2457" y="140.0" width="1" height="1.6" fill="#d4d4d4"/><rect x="2459" y="140.0" width="1" height="1.6" fill="#b5cea8"/><rect x="2460" y="140.0" width="1" height="1.6" fill="#d4d4d4"/><rect x="2434" y="142.0" width="3" height="1.6" fill="#569cd6"/><rect x="2438" y="142.0" width="14" height="1.6" fill="#9cdcfe"/><rect x="2453" y="142.0" width="1" height="1.6" fill="#d4d4d4"/><rect x="2455" y="142.0" width="2" height="1.6" fill="#ffd700"/><rect x="2457" y="142.0" width="1" height="1.6" fill="#d4d4d4"/><rect x="2434" y="144.0" width="3" height="1.6" fill="#569cd6"/><rect x="2438" y="144.0" width="3" height="1.6" fill="#9cdcfe"/><rect x="2441" y="144.0" width="1" height="1.6" fill="#d4d4d4"/><rect x="2434" y="146.0" width="3" height="1.6" fill="#569cd6"/><rect x="2438" y="146.0" width="11" height="1.6" fill="#9cdcfe"/><rect x="2450" y="146.0" width="1" height="1.6" fill="#d4d4d4"/><rect x="2452" y="146.0" width="1" height="1.6" fill="#b5cea8"/><rect x="2453" y="146.0" width="1" height="1.6" fill="#d4d4d4"/><rect x="2434" y="150.0" width="8" height="1.6" fill="#569cd6"/><rect x="2443" y="150.0" width="7" height="1.6" fill="#dcdcaa"/><rect x="2450" y="150.0" width="2" height="1.6" fill="#ffd700"/><rect x="2453" y="150.0" width="1" height="1.6" fill="#ffd700"/><rect x="2436" y="152.0" width="6" height="1.6" fill="#9cdcfe"/><rect x="2442" y="152.0" width="1" height="1.6" fill="#da70d6"/><rect x="2443" y="152.0" width="4" height="1.6" fill="#ce9178"/><rect x="2447" y="152.0" width="1" height="1.6" fill="#da70d6"/><rect x="2449" y="152.0" width="1" height="1.6" fill="#d4d4d4"/><rect x="2451" y="152.0" width="9" height="1.6" fill="#dcdcaa"/><rect x="2460" y="152.0" width="1" height="1.6" fill="#da70d6"/><rect x="2461" y="152.0" width="7" height="1.6" fill="#ce9178"/><rect x="2468" y="152.0" width="1" height="1.6" fill="#da70d6"/><rect x="2469" y="152.0" width="1" height="1.6" fill="#d4d4d4"/><rect x="2436" y="154.0" width="6" height="1.6" fill="#9cdcfe"/><rect x="2442" y="154.0" width="1" height="1.6" fill="#da70d6"/><rect x="2443" y="154.0" width="6" height="1.6" fill="#ce9178"/><rect x="2449" y="154.0" width="1" height="1.6" fill="#da70d6"/><rect x="2451" y="154.0" width="1" height="1.6" fill="#d4d4d4"/><rect x="2453" y="154.0" width="9" height="1.6" fill="#dcdcaa"/><rect x="2462" y="154.0" width="1" height="1.6" fill="#da70d6"/><rect x="2463" y="154.0" width="7" height="1.6" fill="#ce9178"/><rect x="2470" y="154.0" width="1" height="1.6" fill="#da70d6"/><rect x="2471" y="154.0" width="1" height="1.6" fill="#d4d4d4"/><rect x="2436" y="156.0" width="6" height="1.6" fill="#9cdcfe"/><rect x="2442" y="156.0" width="1" height="1.6" fill="#da70d6"/><rect x="2443" y="156.0" width="6" height="1.6" fill="#ce9178"/><rect x="2449" y="156.0" width="1" height="1.6" fill="#da70d6"/><rect x="2451" y="156.0" width="1" height="1.6" fill="#d4d4d4"/><rect x="2453" y="156.0" width="9" height="1.6" fill="#dcdcaa"/><rect x="2462" y="156.0" width="1" height="1.6" fill="#da70d6"/><rect x="2463" y="156.0" width="7" height="1.6" fill="#ce9178"/><rect x="2470" y="156.0" width="1" height="1.6" fill="#da70d6"/><rect x="2471" y="156.0" width="1" height="1.6" fill="#d4d4d4"/><rect x="2436" y="158.0" width="6" height="1.6" fill="#9cdcfe"/><rect x="2442" y="158.0" width="1" height="1.6" fill="#da70d6"/><rect x="2443" y="158.0" width="7" height="1.6" fill="#ce9178"/><rect x="2450" y="158.0" width="1" height="1.6" fill="#da70d6"/><rect x="2452" y="158.0" width="1" height="1.6" fill="#d4d4d4"/><rect x="2454" y="158.0" width="9" height="1.6" fill="#dcdcaa"/><rect x="2463" y="158.0" width="1" height="1.6" fill="#da70d6"/><rect x="2464" y="158.0" width="7" height="1.6" fill="#ce9178"/><rect x="2471" y="158.0" width="1" height="1.6" fill="#da70d6"/><rect x="2472" y="158.0" width="1" height="1.6" fill="#d4d4d4"/><rect x="2436" y="160.0" width="6" height="1.6" fill="#9cdcfe"/><rect x="2442" y="160.0" width="1" height="1.6" fill="#da70d6"/><rect x="2443" y="160.0" width="7" height="1.6" fill="#ce9178"/><rect x="2450" y="160.0" width="1" height="1.6" fill="#da70d6"/><rect x="2452" y="160.0" width="1" height="1.6" fill="#d4d4d4"/><rect x="2454" y="160.0" width="9" height="1.6" fill="#dcdcaa"/><rect x="2463" y="160.0" width="1" height="1.6" fill="#da70d6"/><rect x="2464" y="160.0" width="7" height="1.6" fill="#ce9178"/><rect x="2471" y="160.0" width="1" height="1.6" fill="#da70d6"/><rect x="2472" y="160.0" width="1" height="1.6" fill="#d4d4d4"/><rect x="2434" y="162.0" width="1" height="1.6" fill="#ffd700"/><rect x="2434" y="166.0" width="8" height="1.6" fill="#569cd6"/><rect x="2443" y="166.0" width="5" height="1.6" fill="#dcdcaa"/><rect x="2448" y="166.0" width="2" height="1.6" fill="#ffd700"/><rect x="2451" y="166.0" width="1" height="1.6" fill="#ffd700"/><rect x="2436" y="168.0" width="12" height="1.6" fill="#dcdcaa"/><rect x="2448" y="168.0" width="1" height="1.6" fill="#da70d6"/><rect x="2449" y="168.0" width="3" height="1.6" fill="#b5cea8"/><rect x="2452" y="168.0" width="1" height="1.6" fill="#d4d4d4"/><rect x="2454" y="168.0" width="3" height="1.6" fill="#b5cea8"/><rect x="2457" y="168.0" width="1" height="1.6" fill="#da70d6"/><rect x="2458" y="168.0" width="1" height="1.6" fill="#d4d4d4"/><rect x="2436" y="170.0" width="8" height="1.6" fill="#dcdcaa"/><rect x="2444" y="170.0" width="1" height="1.6" fill="#da70d6"/><rect x="2445" y="170.0" width="2" height="1.6" fill="#b5cea8"/><rect x="2447" y="170.0" width="1" height="1.6" fill="#da70d6"/><rect x="2448" y="170.0" width="1" height="1.6" fill="#d4d4d4"/><rect x="2436" y="172.0" width="9" height="1.6" fill="#dcdcaa"/><rect x="2445" y="172.0" width="1" height="1.6" fill="#da70d6"/><rect x="2446" y="172.0" width="6" height="1.6" fill="#4fc1ff"/><rect x="2452" y="172.0" width="1" height="1.6" fill="#d4d4d4"/><rect x="2454" y="172.0" width="6" height="1.6" fill="#4fc1ff"/><rect x="2460" y="172.0" width="1" height="1.6" fill="#da70d6"/><rect x="2461" y="172.0" width="1" height="1.6" fill="#d4d4d4"/><rect x="2436" y="174.0" width="3" height="1.6" fill="#9cdcfe"/><rect x="2440" y="174.0" width="1" height="1.6" fill="#d4d4d4"/><rect x="2442" y="174.0" width="3" height="1.6" fill="#569cd6"/><rect x="2446" y="174.0" width="2" height="1.6" fill="#9cdcfe"/><rect x="2448" y="174.0" width="1" height="1.6" fill="#d4d4d4"/><rect x="2449" y="174.0" width="3" height="1.6" fill="#4fc1ff"/><rect x="2452" y="174.0" width="2" height="1.6" fill="#da70d6"/><rect x="2454" y="174.0" width="1" height="1.6" fill="#d4d4d4"/><rect x="2436" y="176.0" width="6" height="1.6" fill="#9cdcfe"/><rect x="2442" y="176.0" width="1" height="1.6" fill="#da70d6"/><rect x="2443" y="176.0" width="7" height="1.6" fill="#ce9178"/><rect x="2450" y="176.0" width="1" height="1.6" fill="#da70d6"/><rect x="2451" y="176.0" width="1" height="1.6" fill="#d4d4d4"/><rect x="2452" y="176.0" width="9" height="1.6" fill="#dcdcaa"/><rect x="2461" y="176.0" width="1" height="1.6" fill="#da70d6"/><rect x="2462" y="176.0" width="3" height="1.6" fill="#b5cea8"/><rect x="2465" y="176.0" width="1" height="1.6" fill="#da70d6"/><rect x="2466" y="176.0" width="1" height="1.6" fill="#d4d4d4"/><rect x="2434" y="178.0" width="1" height="1.6" fill="#ffd700"/><rect x="2434" y="182.0" width="8" height="1.6" fill="#569cd6"/><rect x="2443" y="182.0" width="4" height="1.6" fill="#dcdcaa"/><rect x="2447" y="182.0" width="2" height="1.6" fill="#ffd700"/><rect x="2450" y="182.0" width="1" height="1.6" fill="#ffd700"/><rect x="2436" y="184.0" width="2" height="1.6" fill="#c586c0"/><rect x="2439" y="184.0" width="1" height="1.6" fill="#da70d6"/><rect x="2440" y="184.0" width="1" height="1.6" fill="#d4d4d4"/><rect x="2441" y="184.0" width="10" height="1.6" fill="#9cdcfe"/><rect x="2451" y="184.0" width="1" height="1.6" fill="#da70d6"/><rect x="2453" y="184.0" width="6" height="1.6" fill="#c586c0"/><rect x="2459" y="184.0" width="1" height="1.6" fill="#d4d4d4"/><rect x="2436" y="186.0" width="3" height="1.6" fill="#569cd6"/><rect x="2440" y="186.0" width="7" height="1.6" fill="#9cdcfe"/><rect x="2448" y="186.0" width="1" height="1.6" fill="#d4d4d4"/><rect x="2450" y="186.0" width="6" height="1.6" fill="#dcdcaa"/><rect x="2456" y="186.0" width="2" height="1.6" fill="#da70d6"/><rect x="2459" y="186.0" width="1" height="1.6" fill="#d4d4d4"/><rect x="2461" y="186.0" width="11" height="1.6" fill="#9cdcfe"/><rect x="2472" y="186.0" width="1" height="1.6" fill="#d4d4d4"/><rect x="2436" y="188.0" width="2" height="1.6" fill="#c586c0"/><rect x="2439" y="188.0" width="1" height="1.6" fill="#da70d6"/><rect x="2440" y="188.0" width="7" height="1.6" fill="#9cdcfe"/><rect x="2448" y="188.0" width="1" height="1.6" fill="#d4d4d4"/><rect x="2450" y="188.0" width="14" height="1.6" fill="#9cdcfe"/><rect x="2464" y="188.0" width="1" height="1.6" fill="#179fff"/><rect x="2465" y="188.0" width="10" height="1.6" fill="#9cdcfe"/><rect x="2475" y="188.0" width="1" height="1.6" fill="#179fff"/><rect x="2476" y="188.0" width="1" height="1.6" fill="#da70d6"/><rect x="2478" y="188.0" width="1" height="1.6" fill="#da70d6"/><rect x="2438" y="190.0" width="2" height="1.6" fill="#c586c0"/><rect x="2441" y="190.0" width="1" height="1.6" fill="#179fff"/><rect x="2442" y="190.0" width="12" height="1.6" fill="#9cdcfe"/><rect x="2455" y="190.0" width="2" height="1.6" fill="#d4d4d4"/><rect x="2458" y="190.0" width="12" height="1.6" fill="#9cdcfe"/><rect x="2470" y="190.0" width="1" height="1.6" fill="#d4d4d4"/><rect x="2471" y="190.0" width="9" height="1.6" fill="#dcdcaa"/><rect x="2480" y="190.0" width="2" height="1.6" fill="#ffd700"/><rect x="2482" y="190.0" width="1" height="1.6" fill="#179fff"/><rect x="2484" y="190.0" width="12" height="1.6" fill="#9cdcfe"/><rect x="2496" y="190.0" width="1" height="1.6" fill="#d4d4d4"/><rect x="2497" y="190.0" width="4" height="1.6" fill="#dcdcaa"/><rect x="2501" y="190.0" width="2" height="1.6" fill="#179fff"/><rect x="2503" y="190.0" width="1" height="1.6" fill="#d4d4d4"/><rect x="2438" y="192.0" width="10" height="1.6" fill="#9cdcfe"/><rect x="2449" y="192.0" width="1" height="1.6" fill="#d4d4d4"/><rect x="2451" y="192.0" width="4" height="1.6" fill="#569cd6"/><rect x="2455" y="192.0" width="1" height="1.6" fill="#d4d4d4"/><rect x="2438" y="194.0" width="6" height="1.6" fill="#c586c0"/><rect x="2444" y="194.0" width="1" height="1.6" fill="#d4d4d4"/><rect x="2436" y="196.0" width="1" height="1.6" fill="#da70d6"/><rect x="2436" y="198.0" width="10" height="1.6" fill="#dcdcaa"/><rect x="2446" y="198.0" width="1" height="1.6" fill="#da70d6"/><rect x="2447" y="198.0" width="10" height="1.6" fill="#9cdcfe"/><rect x="2458" y="198.0" width="3" height="1.6" fill="#d4d4d4"/><rect x="2462" y="198.0" width="7" height="1.6" fill="#ce9178"/><rect x="2470" y="198.0" width="1" height="1.6" fill="#d4d4d4"/><rect x="2472" y="198.0" width="3" height="1.6" fill="#b5cea8"/><rect x="2476" y="198.0" width="1" height="1.6" fill="#d4d4d4"/><rect x="2478" y="198.0" width="1" height="1.6" fill="#b5cea8"/><rect x="2479" y="198.0" width="1" height="1.6" fill="#da70d6"/><rect x="2480" y="198.0" width="1" height="1.6" fill="#d4d4d4"/><rect x="2436" y="202.0" width="2" height="1.6" fill="#c586c0"/><rect x="2439" y="202.0" width="1" height="1.6" fill="#da70d6"/><rect x="2440" y="202.0" width="10" height="1.6" fill="#9cdcfe"/><rect x="2451" y="202.0" width="3" height="1.6" fill="#d4d4d4"/><rect x="2455" y="202.0" width="4" height="1.6" fill="#ce9178"/><rect x="2459" y="202.0" width="1" height="1.6" fill="#da70d6"/><rect x="2461" y="202.0" width="11" height="1.6" fill="#dcdcaa"/><rect x="2472" y="202.0" width="2" height="1.6" fill="#da70d6"/><rect x="2474" y="202.0" width="1" height="1.6" fill="#d4d4d4"/><rect x="2436" y="204.0" width="2" height="1.6" fill="#c586c0"/><rect x="2439" y="204.0" width="1" height="1.6" fill="#da70d6"/><rect x="2440" y="204.0" width="10" height="1.6" fill="#9cdcfe"/><rect x="2451" y="204.0" width="3" height="1.6" fill="#d4d4d4"/><rect x="2455" y="204.0" width="6" height="1.6" fill="#ce9178"/><rect x="2461" y="204.0" width="1" height="1.6" fill="#da70d6"/><rect x="2463" y="204.0" width="11" height="1.6" fill="#dcdcaa"/><rect x="2474" y="204.0" width="2" height="1.6" fill="#da70d6"/><rect x="2476" y="204.0" width="1" height="1.6" fill="#d4d4d4"/><rect x="2436" y="206.0" width="2" height="1.6" fill="#c586c0"/><rect x="2439" y="206.0" width="1" height="1.6" fill="#da70d6"/><rect x="2440" y="206.0" width="10" height="1.6" fill="#9cdcfe"/><rect x="2451" y="206.0" width="3" height="1.6" fill="#d4d4d4"/><rect x="2455" y="206.0" width="6" height="1.6" fill="#ce9178"/><rect x="2461" y="206.0" width="1" height="1.6" fill="#da70d6"/><rect x="2463" y="206.0" width="10" height="1.6" fill="#dcdcaa"/><rect x="2473" y="206.0" width="1" height="1.6" fill="#da70d6"/><rect x="2474" y="206.0" width="7" height="1.6" fill="#9cdcfe"/><rect x="2481" y="206.0" width="1" height="1.6" fill="#da70d6"/><rect x="2482" y="206.0" width="1" height="1.6" fill="#d4d4d4"/><rect x="2436" y="208.0" width="2" height="1.6" fill="#c586c0"/><rect x="2439" y="208.0" width="1" height="1.6" fill="#da70d6"/><rect x="2440" y="208.0" width="10" height="1.6" fill="#9cdcfe"/><rect x="2451" y="208.0" width="3" height="1.6" fill="#d4d4d4"/><rect x="2455" y="208.0" width="7" height="1.6" fill="#ce9178"/><rect x="2462" y="208.0" width="1" height="1.6" fill="#da70d6"/><rect x="2464" y="208.0" width="11" height="1.6" fill="#dcdcaa"/><rect x="2475" y="208.0" width="1" height="1.6" fill="#da70d6"/><rect x="2476" y="208.0" width="7" height="1.6" fill="#9cdcfe"/><rect x="2483" y="208.0" width="1" height="1.6" fill="#da70d6"/><rect x="2484" y="208.0" width="1" height="1.6" fill="#d4d4d4"/><rect x="2436" y="210.0" width="2" height="1.6" fill="#c586c0"/><rect x="2439" y="210.0" width="1" height="1.6" fill="#da70d6"/><rect x="2440" y="210.0" width="10" height="1.6" fill="#9cdcfe"/><rect x="2451" y="210.0" width="3" height="1.6" fill="#d4d4d4"/><rect x="2455" y="210.0" width="7" height="1.6" fill="#ce9178"/><rect x="2462" y="210.0" width="1" height="1.6" fill="#da70d6"/><rect x="2464" y="210.0" width="24" height="1.6" fill="#dcdcaa"/><rect x="2488" y="210.0" width="2" height="1.6" fill="#da70d6"/><rect x="2490" y="210.0" width="1" height="1.6" fill="#d4d4d4"/><rect x="2434" y="212.0" width="1" height="1.6" fill="#ffd700"/><rect x="2434" y="216.0" width="8" height="1.6" fill="#569cd6"/><rect x="2443" y="216.0" width="10" height="1.6" fill="#dcdcaa"/><rect x="2453" y="216.0" width="2" height="1.6" fill="#ffd700"/><rect x="2456" y="216.0" width="1" height="1.6" fill="#ffd700"/><rect x="2436" y="218.0" width="3" height="1.6" fill="#569cd6"/><rect x="2440" y="218.0" width="6" height="1.6" fill="#9cdcfe"/><rect x="2447" y="218.0" width="1" height="1.6" fill="#d4d4d4"/><rect x="2449" y="218.0" width="1" height="1.6" fill="#da70d6"/><rect x="2438" y="220.0" width="1" height="1.6" fill="#179fff"/><rect x="2439" y="220.0" width="8" height="1.6" fill="#4fc1ff"/><rect x="2447" y="220.0" width="1" height="1.6" fill="#179fff"/><rect x="2448" y="220.0" width="1" height="1.6" fill="#d4d4d4"/><rect x="2450" y="220.0" width="4" height="1.6" fill="#ce9178"/><rect x="2454" y="220.0" width="1" height="1.6" fill="#d4d4d4"/><rect x="2438" y="222.0" width="1" height="1.6" fill="#179fff"/><rect x="2439" y="222.0" width="10" height="1.6" fill="#4fc1ff"/><rect x="2449" y="222.0" width="1" height="1.6" fill="#179fff"/><rect x="2450" y="222.0" width="1" height="1.6" fill="#d4d4d4"/><rect x="2452" y="222.0" width="6" height="1.6" fill="#ce9178"/><rect x="2458" y="222.0" width="1" height="1.6" fill="#d4d4d4"/><rect x="2438" y="224.0" width="1" height="1.6" fill="#179fff"/><rect x="2439" y="224.0" width="10" height="1.6" fill="#4fc1ff"/><rect x="2449" y="224.0" width="1" height="1.6" fill="#179fff"/><rect x="2450" y="224.0" width="1" height="1.6" fill="#d4d4d4"/><rect x="2452" y="224.0" width="6" height="1.6" fill="#ce9178"/><rect x="2458" y="224.0" width="1" height="1.6" fill="#d4d4d4"/><rect x="2438" y="226.0" width="1" height="1.6" fill="#179fff"/><rect x="2439" y="226.0" width="11" height="1.6" fill="#4fc1ff"/><rect x="2450" y="226.0" width="1" height="1.6" fill="#179fff"/><rect x="2451" y="226.0" width="1" height="1.6" fill="#d4d4d4"/><rect x="2453" y="226.0" width="7" height="1.6" fill="#ce9178"/><rect x="2460" y="226.0" width="1" height="1.6" fill="#d4d4d4"/><rect x="2438" y="228.0" width="2" height="1.6" fill="#b5cea8"/><rect x="2440" y="228.0" width="1" height="1.6" fill="#d4d4d4"/><rect x="2442" y="228.0" width="7" height="1.6" fill="#ce9178"/><rect x="2436" y="230.0" width="1" height="1.6" fill="#da70d6"/><rect x="2437" y="230.0" width="1" height="1.6" fill="#d4d4d4"/><rect x="2436" y="234.0" width="3" height="1.6" fill="#569cd6"/><rect x="2440" y="234.0" width="6" height="1.6" fill="#9cdcfe"/><rect x="2447" y="234.0" width="1" height="1.6" fill="#d4d4d4"/><rect x="2449" y="234.0" width="6" height="1.6" fill="#9cdcfe"/><rect x="2455" y="234.0" width="1" height="1.6" fill="#da70d6"/><rect x="2456" y="234.0" width="7" height="1.6" fill="#9cdcfe"/><rect x="2463" y="234.0" width="1" height="1.6" fill="#da70d6"/><rect x="2464" y="234.0" width="1" height="1.6" fill="#d4d4d4"/><rect x="2436" y="236.0" width="2" height="1.6" fill="#c586c0"/><rect x="2439" y="236.0" width="1" height="1.6" fill="#da70d6"/><rect x="2440" y="236.0" width="6" height="1.6" fill="#9cdcfe"/><rect x="2446" y="236.0" width="1" height="1.6" fill="#da70d6"/><rect x="2448" y="236.0" width="1" height="1.6" fill="#da70d6"/><rect x="2438" y="238.0" width="3" height="1.6" fill="#c586c0"/><rect x="2442" y="238.0" width="1" height="1.6" fill="#179fff"/><rect x="2443" y="238.0" width="3" height="1.6" fill="#569cd6"/><rect x="2447" y="238.0" width="1" height="1.6" fill="#9cdcfe"/><rect x="2449" y="238.0" width="2" height="1.6" fill="#569cd6"/><rect x="2452" y="238.0" width="6" height="1.6" fill="#9cdcfe"/><rect x="2458" y="238.0" width="1" height="1.6" fill="#179fff"/><rect x="2460" y="238.0" width="1" height="1.6" fill="#179fff"/><rect x="2440" y="240.0" width="2" height="1.6" fill="#c586c0"/><rect x="2443" y="240.0" width="1" height="1.6" fill="#ffd700"/><rect x="2444" y="240.0" width="6" height="1.6" fill="#9cdcfe"/><rect x="2450" y="240.0" width="1" height="1.6" fill="#da70d6"/><rect x="2451" y="240.0" width="1" height="1.6" fill="#9cdcfe"/><rect x="2452" y="240.0" width="1" height="1.6" fill="#da70d6"/><rect x="2453" y="240.0" width="1" height="1.6" fill="#d4d4d4"/><rect x="2454" y="240.0" width="9" height="1.6" fill="#dcdcaa"/><rect x="2463" y="240.0" width="2" height="1.6" fill="#da70d6"/><rect x="2465" y="240.0" width="1" height="1.6" fill="#ffd700"/><rect x="2467" y="240.0" width="6" height="1.6" fill="#9cdcfe"/><rect x="2473" y="240.0" width="1" height="1.6" fill="#ffd700"/><rect x="2474" y="240.0" width="1" height="1.6" fill="#9cdcfe"/><rect x="2475" y="240.0" width="1" height="1.6" fill="#ffd700"/><rect x="2476" y="240.0" width="1" height="1.6" fill="#d4d4d4"/><rect x="2477" y="240.0" width="4" height="1.6" fill="#dcdcaa"/><rect x="2481" y="240.0" width="2" height="1.6" fill="#ffd700"/><rect x="2483" y="240.0" width="1" height="1.6" fill="#d4d4d4"/><rect x="2438" y="242.0" width="1" height="1.6" fill="#179fff"/><rect x="2438" y="244.0" width="12" height="1.6" fill="#9cdcfe"/><rect x="2451" y="244.0" width="1" height="1.6" fill="#d4d4d4"/><rect x="2453" y="244.0" width="6" height="1.6" fill="#9cdcfe"/><rect x="2459" y="244.0" width="1" height="1.6" fill="#179fff"/><rect x="2460" y="244.0" width="6" height="1.6" fill="#9cdcfe"/><rect x="2466" y="244.0" width="1" height="1.6" fill="#179fff"/><rect x="2467" y="244.0" width="1" height="1.6" fill="#d4d4d4"/><rect x="2438" y="246.0" width="10" height="1.6" fill="#9cdcfe"/><rect x="2449" y="246.0" width="1" height="1.6" fill="#d4d4d4"/><rect x="2451" y="246.0" width="6" height="1.6" fill="#9cdcfe"/><rect x="2457" y="246.0" width="1" height="1.6" fill="#d4d4d4"/><rect x="2438" y="248.0" width="11" height="1.6" fill="#9cdcfe"/><rect x="2450" y="248.0" width="1" height="1.6" fill="#d4d4d4"/><rect x="2452" y="248.0" width="6" height="1.6" fill="#dcdcaa"/><rect x="2458" y="248.0" width="2" height="1.6" fill="#179fff"/><rect x="2460" y="248.0" width="1" height="1.6" fill="#d4d4d4"/><rect x="2438" y="250.0" width="12" height="1.6" fill="#9cdcfe"/><rect x="2450" y="250.0" width="1" height="1.6" fill="#d4d4d4"/><rect x="2451" y="250.0" width="4" height="1.6" fill="#dcdcaa"/><rect x="2455" y="250.0" width="2" height="1.6" fill="#179fff"/><rect x="2457" y="250.0" width="1" height="1.6" fill="#d4d4d4"/><rect x="2438" y="254.0" width="2" height="1.6" fill="#c586c0"/><rect x="2441" y="254.0" width="1" height="1.6" fill="#179fff"/><rect x="2442" y="254.0" width="6" height="1.6" fill="#9cdcfe"/><rect x="2449" y="254.0" width="3" height="1.6" fill="#d4d4d4"/><rect x="2453" y="254.0" width="4" height="1.6" fill="#ce9178"/><rect x="2457" y="254.0" width="1" height="1.6" fill="#179fff"/><rect x="2459" y="254.0" width="11" height="1.6" fill="#dcdcaa"/><rect x="2470" y="254.0" width="2" height="1.6" fill="#179fff"/><rect x="2472" y="254.0" width="1" height="1.6" fill="#d4d4d4"/><rect x="2438" y="256.0" width="2" height="1.6" fill="#c586c0"/><rect x="2441" y="256.0" width="1" height="1.6" fill="#179fff"/><rect x="2442" y="256.0" width="6" height="1.6" fill="#9cdcfe"/><rect x="2449" y="256.0" width="3" height="1.6" fill="#d4d4d4"/><rect x="2453" y="256.0" width="6" height="1.6" fill="#ce9178"/><rect x="2459" y="256.0" width="1" height="1.6" fill="#179fff"/><rect x="2461" y="256.0" width="11" height="1.6" fill="#dcdcaa"/><rect x="2472" y="256.0" width="2" height="1.6" fill="#179fff"/><rect x="2474" y="256.0" width="1" height="1.6" fill="#d4d4d4"/><rect x="2438" y="258.0" width="2" height="1.6" fill="#c586c0"/><rect x="2441" y="258.0" width="1" height="1.6" fill="#179fff"/><rect x="2442" y="258.0" width="6" height="1.6" fill="#9cdcfe"/><rect x="2449" y="258.0" width="3" height="1.6" fill="#d4d4d4"/><rect x="2453" y="258.0" width="6" height="1.6" fill="#ce9178"/><rect x="2459" y="258.0" width="1" height="1.6" fill="#179fff"/><rect x="2461" y="258.0" width="10" height="1.6" fill="#dcdcaa"/><rect x="2471" y="258.0" width="2" height="1.6" fill="#179fff"/><rect x="2473" y="258.0" width="1" height="1.6" fill="#d4d4d4"/><rect x="2438" y="260.0" width="2" height="1.6" fill="#c586c0"/><rect x="2441" y="260.0" width="1" height="1.6" fill="#179fff"/><rect x="2442" y="260.0" width="6" height="1.6" fill="#9cdcfe"/><rect x="2449" y="260.0" width="3" height="1.6" fill="#d4d4d4"/><rect x="2453" y="260.0" width="7" height="1.6" fill="#ce9178"/><rect x="2460" y="260.0" width="1" height="1.6" fill="#179fff"/><rect x="2462" y="260.0" width="11" height="1.6" fill="#dcdcaa"/><rect x="2473" y="260.0" width="2" height="1.6" fill="#179fff"/><rect x="2475" y="260.0" width="1" height="1.6" fill="#d4d4d4"/><rect x="2436" y="262.0" width="1" height="1.6" fill="#da70d6"/><rect x="2434" y="264.0" width="1" height="1.6" fill="#ffd700"/><rect x="2434" y="268.0" width="8" height="1.6" fill="#569cd6"/><rect x="2443" y="268.0" width="11" height="1.6" fill="#dcdcaa"/><rect x="2454" y="268.0" width="2" height="1.6" fill="#ffd700"/><rect x="2457" y="268.0" width="1" height="1.6" fill="#ffd700"/><rect x="2436" y="270.0" width="5" height="1.6" fill="#9cdcfe"/><rect x="2442" y="270.0" width="1" height="1.6" fill="#d4d4d4"/><rect x="2444" y="270.0" width="2" height="1.6" fill="#da70d6"/><rect x="2446" y="270.0" width="1" height="1.6" fill="#d4d4d4"/><rect x="2436" y="272.0" width="3" height="1.6" fill="#c586c0"/><rect x="2440" y="272.0" width="1" height="1.6" fill="#da70d6"/><rect x="2441" y="272.0" width="3" height="1.6" fill="#569cd6"/><rect x="2445" y="272.0" width="1" height="1.6" fill="#9cdcfe"/><rect x="2447" y="272.0" width="1" height="1.6" fill="#d4d4d4"/><rect x="2449" y="272.0" width="1" height="1.6" fill="#b5cea8"/><rect x="2450" y="272.0" width="1" height="1.6" fill="#d4d4d4"/><rect x="2452" y="272.0" width="1" height="1.6" fill="#9cdcfe"/><rect x="2454" y="272.0" width="1" height="1.6" fill="#d4d4d4"/><rect x="2456" y="272.0" width="2" height="1.6" fill="#b5cea8"/><rect x="2458" y="272.0" width="1" height="1.6" fill="#d4d4d4"/><rect x="2460" y="272.0" width="1" height="1.6" fill="#9cdcfe"/><rect x="2461" y="272.0" width="2" height="1.6" fill="#d4d4d4"/><rect x="2463" y="272.0" width="1" height="1.6" fill="#da70d6"/><rect x="2465" y="272.0" width="1" height="1.6" fill="#da70d6"/><rect x="2438" y="274.0" width="5" height="1.6" fill="#9cdcfe"/><rect x="2443" y="274.0" width="1" height="1.6" fill="#d4d4d4"/><rect x="2444" y="274.0" width="4" height="1.6" fill="#dcdcaa"/><rect x="2448" y="274.0" width="1" height="1.6" fill="#179fff"/><rect x="2449" y="274.0" width="1" height="1.6" fill="#ffd700"/><rect x="2451" y="274.0" width="1" height="1.6" fill="#9cdcfe"/><rect x="2452" y="274.0" width="1" height="1.6" fill="#d4d4d4"/><rect x="2454" y="274.0" width="6" height="1.6" fill="#dcdcaa"/><rect x="2460" y="274.0" width="1" height="1.6" fill="#da70d6"/><rect x="2461" y="274.0" width="5" height="1.6" fill="#9cdcfe"/><rect x="2466" y="274.0" width="1" height="1.6" fill="#da70d6"/><rect x="2467" y="274.0" width="1" height="1.6" fill="#d4d4d4"/><rect x="2469" y="274.0" width="1" height="1.6" fill="#9cdcfe"/><rect x="2470" y="274.0" width="1" height="1.6" fill="#d4d4d4"/><rect x="2472" y="274.0" width="6" height="1.6" fill="#dcdcaa"/><rect x="2478" y="274.0" width="1" height="1.6" fill="#da70d6"/><rect x="2479" y="274.0" width="1" height="1.6" fill="#d4d4d4"/><rect x="2480" y="274.0" width="6" height="1.6" fill="#9cdcfe"/><rect x="2486" y="274.0" width="1" height="1.6" fill="#d4d4d4"/><rect x="2488" y="274.0" width="1" height="1.6" fill="#b5cea8"/><rect x="2489" y="274.0" width="1" height="1.6" fill="#da70d6"/><rect x="2490" y="274.0" width="1" height="1.6" fill="#d4d4d4"/><rect x="2492" y="274.0" width="1" height="1.6" fill="#9cdcfe"/><rect x="2493" y="274.0" width="1" height="1.6" fill="#d4d4d4"/><rect x="2495" y="274.0" width="6" height="1.6" fill="#dcdcaa"/><rect x="2501" y="274.0" width="1" height="1.6" fill="#da70d6"/><rect x="2502" y="274.0" width="2" height="1.6" fill="#b5cea8"/><rect x="2504" y="274.0" width="1" height="1.6" fill="#d4d4d4"/><rect x="2506" y="274.0" width="2" height="1.6" fill="#b5cea8"/><rect x="2508" y="274.0" width="1" height="1.6" fill="#da70d6"/><rect x="2509" y="274.0" width="1" height="1.6" fill="#d4d4d4"/><rect x="2511" y="274.0" width="5" height="1.6" fill="#9cdcfe"/><rect x="2516" y="274.0" width="1" height="1.6" fill="#d4d4d4"/><rect x="2518" y="274.0" width="6" height="1.6" fill="#dcdcaa"/><rect x="2524" y="274.0" width="1" height="1.6" fill="#da70d6"/><rect x="2525" y="274.0" width="1" height="1.6" fill="#b5cea8"/><rect x="2526" y="274.0" width="1" height="1.6" fill="#d4d4d4"/><rect x="2528" y="274.0" width="1" height="1.6" fill="#b5cea8"/><rect x="2529" y="274.0" width="1" height="1.6" fill="#da70d6"/><rect x="2531" y="274.0" width="1" height="1.6" fill="#ffd700"/><rect x="2532" y="274.0" width="1" height="1.6" fill="#179fff"/><rect x="2533" y="274.0" width="1" height="1.6" fill="#d4d4d4"/><rect x="2436" y="276.0" width="1" height="1.6" fill="#da70d6"/><rect x="2434" y="278.0" width="1" height="1.6" fill="#ffd700"/><rect x="2434" y="280.0" width="8" height="1.6" fill="#569cd6"/><rect x="2443" y="280.0" width="11" height="1.6" fill="#dcdcaa"/><rect x="2454" y="280.0" width="2" height="1.6" fill="#ffd700"/><rect x="2457" y="280.0" width="1" height="1.6" fill="#ffd700"/><rect x="2436" y="282.0" width="8" height="1.6" fill="#dcdcaa"/><rect x="2444" y="282.0" width="2" height="1.6" fill="#da70d6"/><rect x="2446" y="282.0" width="1" height="1.6" fill="#d4d4d4"/><rect x="2448" y="282.0" width="4" height="1.6" fill="#dcdcaa"/><rect x="2452" y="282.0" width="1" height="1.6" fill="#da70d6"/><rect x="2453" y="282.0" width="3" height="1.6" fill="#b5cea8"/><rect x="2456" y="282.0" width="1" height="1.6" fill="#da70d6"/><rect x="2457" y="282.0" width="1" height="1.6" fill="#d4d4d4"/><rect x="2436" y="284.0" width="3" height="1.6" fill="#c586c0"/><rect x="2440" y="284.0" width="1" height="1.6" fill="#da70d6"/><rect x="2441" y="284.0" width="3" height="1.6" fill="#569cd6"/><rect x="2445" y="284.0" width="1" height="1.6" fill="#9cdcfe"/><rect x="2447" y="284.0" width="2" height="1.6" fill="#569cd6"/><rect x="2450" y="284.0" width="5" height="1.6" fill="#9cdcfe"/><rect x="2455" y="284.0" width="1" height="1.6" fill="#da70d6"/><rect x="2457" y="284.0" width="1" height="1.6" fill="#da70d6"/><rect x="2438" y="286.0" width="7" height="1.6" fill="#dcdcaa"/><rect x="2445" y="286.0" width="1" height="1.6" fill="#179fff"/><rect x="2446" y="286.0" width="1" height="1.6" fill="#9cdcfe"/><rect x="2447" y="286.0" width="1" height="1.6" fill="#d4d4d4"/><rect x="2448" y="286.0" width="1" height="1.6" fill="#9cdcfe"/><rect x="2449" y="286.0" width="1" height="1.6" fill="#d4d4d4"/><rect x="2451" y="286.0" width="1" height="1.6" fill="#9cdcfe"/><rect x="2452" y="286.0" width="1" height="1.6" fill="#d4d4d4"/><rect x="2453" y="286.0" width="1" height="1.6" fill="#9cdcfe"/><rect x="2454" y="286.0" width="1" height="1.6" fill="#d4d4d4"/><rect x="2456" y="286.0" width="1" height="1.6" fill="#9cdcfe"/><rect x="2457" y="286.0" width="1" height="1.6" fill="#d4d4d4"/><rect x="2458" y="286.0" width="1" height="1.6" fill="#9cdcfe"/><rect x="2459" y="286.0" width="1" height="1.6" fill="#179fff"/><rect x="2460" y="286.0" width="1" height="1.6" fill="#d4d4d4"/><rect x="2438" y="288.0" width="1" height="1.6" fill="#9cdcfe"/><rect x="2439" y="288.0" width="1" height="1.6" fill="#d4d4d4"/><rect x="2440" y="288.0" width="1" height="1.6" fill="#9cdcfe"/><rect x="2442" y="288.0" width="2" height="1.6" fill="#d4d4d4"/><rect x="2445" y="288.0" width="1" height="1.6" fill="#9cdcfe"/><rect x="2446" y="288.0" width="1" height="1.6" fill="#d4d4d4"/><rect x="2447" y="288.0" width="5" height="1.6" fill="#9cdcfe"/><rect x="2452" y="288.0" width="1" height="1.6" fill="#d4d4d4"/><rect x="2438" y="290.0" width="2" height="1.6" fill="#c586c0"/><rect x="2441" y="290.0" width="1" height="1.6" fill="#179fff"/><rect x="2442" y="290.0" width="1" height="1.6" fill="#9cdcfe"/><rect x="2443" y="290.0" width="1" height="1.6" fill="#d4d4d4"/><rect x="2444" y="290.0" width="1" height="1.6" fill="#9cdcfe"/><rect x="2446" y="290.0" width="1" height="1.6" fill="#d4d4d4"/><rect x="2448" y="290.0" width="6" height="1.6" fill="#9cdcfe"/><rect x="2455" y="290.0" width="1" height="1.6" fill="#d4d4d4"/><rect x="2457" y="290.0" width="2" height="1.6" fill="#b5cea8"/><rect x="2459" y="290.0" width="1" height="1.6" fill="#179fff"/><rect x="2461" y="290.0" width="1" height="1.6" fill="#9cdcfe"/><rect x="2462" y="290.0" width="1" height="1.6" fill="#d4d4d4"/><rect x="2463" y="290.0" width="1" height="1.6" fill="#9cdcfe"/><rect x="2465" y="290.0" width="1" height="1.6" fill="#d4d4d4"/><rect x="2467" y="290.0" width="1" height="1.6" fill="#d4d4d4"/><rect x="2468" y="290.0" width="1" height="1.6" fill="#9cdcfe"/><rect x="2469" y="290.0" width="1" height="1.6" fill="#d4d4d4"/><rect x="2470" y="290.0" width="1" height="1.6" fill="#9cdcfe"/><rect x="2471" y="290.0" width="1" height="1.6" fill="#d4d4d4"/><rect x="2438" y="292.0" width="1" height="1.6" fill="#9cdcfe"/><rect x="2439" y="292.0" width="1" height="1.6" fill="#d4d4d4"/><rect x="2440" y="292.0" width="1" height="1.6" fill="#9cdcfe"/><rect x="2442" y="292.0" width="2" height="1.6" fill="#d4d4d4"/><rect x="2445" y="292.0" width="3" height="1.6" fill="#dcdcaa"/><rect x="2448" y="292.0" width="1" height="1.6" fill="#179fff"/><rect x="2449" y="292.0" width="1" height="1.6" fill="#9cdcfe"/><rect x="2450" y="292.0" width="1" height="1.6" fill="#d4d4d4"/><rect x="2451" y="292.0" width="1" height="1.6" fill="#9cdcfe"/><rect x="2452" y="292.0" width="1" height="1.6" fill="#179fff"/><rect x="2453" y="292.0" width="1" height="1.6" fill="#d4d4d4"/><rect x="2438" y="294.0" width="2" height="1.6" fill="#c586c0"/><rect x="2441" y="294.0" width="1" height="1.6" fill="#179fff"/><rect x="2442" y="294.0" width="1" height="1.6" fill="#9cdcfe"/><rect x="2443" y="294.0" width="1" height="1.6" fill="#d4d4d4"/><rect x="2444" y="294.0" width="1" height="1.6" fill="#9cdcfe"/><rect x="2446" y="294.0" width="1" height="1.6" fill="#d4d4d4"/><rect x="2448" y="294.0" width="6" height="1.6" fill="#9cdcfe"/><rect x="2454" y="294.0" width="1" height="1.6" fill="#179fff"/><rect x="2456" y="294.0" width="1" height="1.6" fill="#179fff"/><rect x="2440" y="296.0" width="1" height="1.6" fill="#9cdcfe"/><rect x="2441" y="296.0" width="1" height="1.6" fill="#d4d4d4"/><rect x="2442" y="296.0" width="1" height="1.6" fill="#9cdcfe"/><rect x="2444" y="296.0" width="1" height="1.6" fill="#d4d4d4"/><rect x="2446" y="296.0" width="6" height="1.6" fill="#dcdcaa"/><rect x="2452" y="296.0" width="1" height="1.6" fill="#ffd700"/><rect x="2453" y="296.0" width="1" height="1.6" fill="#d4d4d4"/><rect x="2454" y="296.0" width="3" height="1.6" fill="#b5cea8"/><rect x="2457" y="296.0" width="1" height="1.6" fill="#ffd700"/><rect x="2458" y="296.0" width="1" height="1.6" fill="#d4d4d4"/><rect x="2440" y="298.0" width="1" height="1.6" fill="#9cdcfe"/><rect x="2441" y="298.0" width="1" height="1.6" fill="#d4d4d4"/><rect x="2442" y="298.0" width="1" height="1.6" fill="#9cdcfe"/><rect x="2444" y="298.0" width="1" height="1.6" fill="#d4d4d4"/><rect x="2446" y="298.0" width="6" height="1.6" fill="#dcdcaa"/><rect x="2452" y="298.0" width="1" height="1.6" fill="#ffd700"/><rect x="2453" y="298.0" width="5" height="1.6" fill="#9cdcfe"/><rect x="2458" y="298.0" width="1" height="1.6" fill="#ffd700"/><rect x="2460" y="298.0" width="1" height="1.6" fill="#d4d4d4"/><rect x="2462" y="298.0" width="2" height="1.6" fill="#b5cea8"/><rect x="2464" y="298.0" width="1" height="1.6" fill="#d4d4d4"/><rect x="2440" y="300.0" width="1" height="1.6" fill="#9cdcfe"/><rect x="2441" y="300.0" width="1" height="1.6" fill="#d4d4d4"/><rect x="2442" y="300.0" width="1" height="1.6" fill="#9cdcfe"/><rect x="2444" y="300.0" width="1" height="1.6" fill="#d4d4d4"/><rect x="2446" y="300.0" width="6" height="1.6" fill="#dcdcaa"/><rect x="2452" y="300.0" width="1" height="1.6" fill="#ffd700"/><rect x="2453" y="300.0" width="2" height="1.6" fill="#b5cea8"/><rect x="2455" y="300.0" width="1" height="1.6" fill="#d4d4d4"/><rect x="2457" y="300.0" width="2" height="1.6" fill="#b5cea8"/><rect x="2459" y="300.0" width="1" height="1.6" fill="#ffd700"/><rect x="2460" y="300.0" width="1" height="1.6" fill="#d4d4d4"/><rect x="2440" y="302.0" width="1" height="1.6" fill="#9cdcfe"/><rect x="2441" y="302.0" width="1" height="1.6" fill="#d4d4d4"/><rect x="2442" y="302.0" width="1" height="1.6" fill="#9cdcfe"/><rect x="2444" y="302.0" width="1" height="1.6" fill="#d4d4d4"/><rect x="2446" y="302.0" width="1" height="1.6" fill="#b5cea8"/><rect x="2447" y="302.0" width="1" height="1.6" fill="#d4d4d4"/><rect x="2438" y="304.0" width="1" height="1.6" fill="#179fff"/><rect x="2436" y="306.0" width="1" height="1.6" fill="#da70d6"/><rect x="2434" y="308.0" width="1" height="1.6" fill="#ffd700"/><rect x="2434" y="312.0" width="8" height="1.6" fill="#569cd6"/><rect x="2443" y="312.0" width="11" height="1.6" fill="#dcdcaa"/><rect x="2454" y="312.0" width="2" height="1.6" fill="#ffd700"/><rect x="2457" y="312.0" width="1" height="1.6" fill="#ffd700"/><rect x="2436" y="314.0" width="7" height="1.6" fill="#9cdcfe"/><rect x="2444" y="314.0" width="1" height="1.6" fill="#d4d4d4"/><rect x="2446" y="314.0" width="2" height="1.6" fill="#da70d6"/><rect x="2448" y="314.0" width="1" height="1.6" fill="#d4d4d4"/><rect x="2436" y="316.0" width="3" height="1.6" fill="#c586c0"/><rect x="2440" y="316.0" width="1" height="1.6" fill="#da70d6"/><rect x="2441" y="316.0" width="3" height="1.6" fill="#569cd6"/><rect x="2445" y="316.0" width="1" height="1.6" fill="#9cdcfe"/><rect x="2447" y="316.0" width="1" height="1.6" fill="#d4d4d4"/><rect x="2449" y="316.0" width="1" height="1.6" fill="#b5cea8"/><rect x="2450" y="316.0" width="1" height="1.6" fill="#d4d4d4"/><rect x="2452" y="316.0" width="1" height="1.6" fill="#9cdcfe"/><rect x="2454" y="316.0" width="1" height="1.6" fill="#d4d4d4"/><rect x="2456" y="316.0" width="2" height="1.6" fill="#b5cea8"/><rect x="2458" y="316.0" width="1" height="1.6" fill="#d4d4d4"/><rect x="2460" y="316.0" width="1" height="1.6" fill="#9cdcfe"/><rect x="2461" y="316.0" width="2" height="1.6" fill="#d4d4d4"/><rect x="2463" y="316.0" width="1" height="1.6" fill="#da70d6"/><rect x="2465" y="316.0" width="1" height="1.6" fill="#da70d6"/><rect x="2438" y="318.0" width="7" height="1.6" fill="#9cdcfe"/><rect x="2445" y="318.0" width="1" height="1.6" fill="#d4d4d4"/><rect x="2446" y="318.0" width="4" height="1.6" fill="#dcdcaa"/><rect x="2450" y="318.0" width="1" height="1.6" fill="#179fff"/><rect x="2451" y="318.0" width="1" height="1.6" fill="#ffd700"/><rect x="2453" y="318.0" width="1" height="1.6" fill="#9cdcfe"/><rect x="2454" y="318.0" width="1" height="1.6" fill="#d4d4d4"/><rect x="2456" y="318.0" width="6" height="1.6" fill="#dcdcaa"/><rect x="2462" y="318.0" width="1" height="1.6" fill="#da70d6"/><rect x="2463" y="318.0" width="5" height="1.6" fill="#9cdcfe"/><rect x="2468" y="318.0" width="1" height="1.6" fill="#da70d6"/><rect x="2469" y="318.0" width="1" height="1.6" fill="#d4d4d4"/><rect x="2471" y="318.0" width="1" height="1.6" fill="#9cdcfe"/><rect x="2472" y="318.0" width="1" height="1.6" fill="#d4d4d4"/><rect x="2474" y="318.0" width="6" height="1.6" fill="#dcdcaa"/><rect x="2480" y="318.0" width="1" height="1.6" fill="#da70d6"/><rect x="2481" y="318.0" width="6" height="1.6" fill="#9cdcfe"/><rect x="2487" y="318.0" width="1" height="1.6" fill="#da70d6"/><rect x="2488" y="318.0" width="1" height="1.6" fill="#d4d4d4"/><rect x="2490" y="318.0" width="1" height="1.6" fill="#9cdcfe"/><rect x="2491" y="318.0" width="1" height="1.6" fill="#d4d4d4"/><rect x="2493" y="318.0" width="6" height="1.6" fill="#dcdcaa"/><rect x="2499" y="318.0" width="1" height="1.6" fill="#da70d6"/><rect x="2500" y="318.0" width="2" height="1.6" fill="#b5cea8"/><rect x="2502" y="318.0" width="1" height="1.6" fill="#d4d4d4"/><rect x="2504" y="318.0" width="2" height="1.6" fill="#b5cea8"/><rect x="2506" y="318.0" width="1" height="1.6" fill="#da70d6"/><rect x="2508" y="318.0" width="1" height="1.6" fill="#ffd700"/><rect x="2509" y="318.0" width="1" height="1.6" fill="#179fff"/><rect x="2510" y="318.0" width="1" height="1.6" fill="#d4d4d4"/><rect x="2436" y="320.0" width="1" height="1.6" fill="#da70d6"/><rect x="2434" y="322.0" width="1" height="1.6" fill="#ffd700"/><rect x="2434" y="324.0" width="8" height="1.6" fill="#569cd6"/><rect x="2443" y="324.0" width="11" height="1.6" fill="#dcdcaa"/><rect x="2454" y="324.0" width="2" height="1.6" fill="#ffd700"/><rect x="2457" y="324.0" width="1" height="1.6" fill="#ffd700"/><rect x="2436" y="326.0" width="6" height="1.6" fill="#dcdcaa"/><rect x="2442" y="326.0" width="2" height="1.6" fill="#da70d6"/><rect x="2444" y="326.0" width="1" height="1.6" fill="#d4d4d4"/><rect x="2446" y="326.0" width="6" height="1.6" fill="#dcdcaa"/><rect x="2452" y="326.0" width="1" height="1.6" fill="#da70d6"/><rect x="2453" y="326.0" width="3" height="1.6" fill="#b5cea8"/><rect x="2456" y="326.0" width="1" height="1.6" fill="#da70d6"/><rect x="2457" y="326.0" width="1" height="1.6" fill="#d4d4d4"/><rect x="2436" y="328.0" width="3" height="1.6" fill="#c586c0"/><rect x="2440" y="328.0" width="1" height="1.6" fill="#da70d6"/><rect x="2441" y="328.0" width="3" height="1.6" fill="#569cd6"/><rect x="2445" y="328.0" width="1" height="1.6" fill="#9cdcfe"/><rect x="2447" y="328.0" width="2" height="1.6" fill="#569cd6"/><rect x="2450" y="328.0" width="7" height="1.6" fill="#9cdcfe"/><rect x="2457" y="328.0" width="1" height="1.6" fill="#da70d6"/><rect x="2459" y="328.0" width="1" height="1.6" fill="#da70d6"/><rect x="2438" y="330.0" width="1" height="1.6" fill="#9cdcfe"/><rect x="2439" y="330.0" width="1" height="1.6" fill="#d4d4d4"/><rect x="2440" y="330.0" width="1" height="1.6" fill="#9cdcfe"/><rect x="2442" y="330.0" width="2" height="1.6" fill="#d4d4d4"/><rect x="2445" y="330.0" width="6" height="1.6" fill="#dcdcaa"/><rect x="2451" y="330.0" width="1" height="1.6" fill="#179fff"/><rect x="2452" y="330.0" width="1" height="1.6" fill="#b5cea8"/><rect x="2453" y="330.0" width="1" height="1.6" fill="#d4d4d4"/><rect x="2455" y="330.0" width="1" height="1.6" fill="#b5cea8"/><rect x="2456" y="330.0" width="1" height="1.6" fill="#179fff"/><rect x="2457" y="330.0" width="1" height="1.6" fill="#d4d4d4"/><rect x="2438" y="332.0" width="1" height="1.6" fill="#9cdcfe"/><rect x="2439" y="332.0" width="1" height="1.6" fill="#d4d4d4"/><rect x="2440" y="332.0" width="1" height="1.6" fill="#9cdcfe"/><rect x="2442" y="332.0" width="2" height="1.6" fill="#d4d4d4"/><rect x="2445" y="332.0" width="6" height="1.6" fill="#dcdcaa"/><rect x="2451" y="332.0" width="1" height="1.6" fill="#179fff"/><rect x="2452" y="332.0" width="1" height="1.6" fill="#d4d4d4"/><rect x="2453" y="332.0" width="1" height="1.6" fill="#b5cea8"/><rect x="2454" y="332.0" width="1" height="1.6" fill="#d4d4d4"/><rect x="2456" y="332.0" width="1" height="1.6" fill="#b5cea8"/><rect x="2457" y="332.0" width="1" height="1.6" fill="#179fff"/><rect x="2458" y="332.0" width="1" height="1.6" fill="#d4d4d4"/><rect x="2438" y="334.0" width="7" height="1.6" fill="#dcdcaa"/><rect x="2445" y="334.0" width="1" height="1.6" fill="#179fff"/><rect x="2446" y="334.0" width="1" height="1.6" fill="#9cdcfe"/><rect x="2447" y="334.0" width="1" height="1.6" fill="#d4d4d4"/><rect x="2448" y="334.0" width="1" height="1.6" fill="#9cdcfe"/><rect x="2449" y="334.0" width="1" height="1.6" fill="#d4d4d4"/><rect x="2451" y="334.0" width="1" height="1.6" fill="#9cdcfe"/><rect x="2452" y="334.0" width="1" height="1.6" fill="#d4d4d4"/><rect x="2453" y="334.0" width="1" height="1.6" fill="#9cdcfe"/><rect x="2454" y="334.0" width="1" height="1.6" fill="#d4d4d4"/><rect x="2456" y="334.0" width="1" height="1.6" fill="#9cdcfe"/><rect x="2457" y="334.0" width="1" height="1.6" fill="#d4d4d4"/><rect x="2458" y="334.0" width="1" height="1.6" fill="#9cdcfe"/><rect x="2459" y="334.0" width="1" height="1.6" fill="#179fff"/><rect x="2460" y="334.0" width="1" height="1.6" fill="#d4d4d4"/><rect x="2438" y="336.0" width="2" height="1.6" fill="#c586c0"/><rect x="2441" y="336.0" width="1" height="1.6" fill="#179fff"/><rect x="2442" y="336.0" width="1" height="1.6" fill="#9cdcfe"/><rect x="2443" y="336.0" width="1" height="1.6" fill="#d4d4d4"/><rect x="2444" y="336.0" width="1" height="1.6" fill="#9cdcfe"/><rect x="2446" y="336.0" width="1" height="1.6" fill="#d4d4d4"/><rect x="2448" y="336.0" width="1" height="1.6" fill="#b5cea8"/><rect x="2449" y="336.0" width="1" height="1.6" fill="#179fff"/><rect x="2451" y="336.0" width="1" height="1.6" fill="#9cdcfe"/><rect x="2452" y="336.0" width="1" height="1.6" fill="#d4d4d4"/><rect x="2453" y="336.0" width="1" height="1.6" fill="#9cdcfe"/><rect x="2455" y="336.0" width="1" height="1.6" fill="#d4d4d4"/><rect x="2457" y="336.0" width="6" height="1.6" fill="#9cdcfe"/><rect x="2463" y="336.0" width="1" height="1.6" fill="#d4d4d4"/><rect x="2436" y="338.0" width="1" height="1.6" fill="#da70d6"/><rect x="2434" y="340.0" width="1" height="1.6" fill="#ffd700"/><rect x="2434" y="344.0" width="8" height="1.6" fill="#569cd6"/><rect x="2443" y="344.0" width="10" height="1.6" fill="#dcdcaa"/><rect x="2453" y="344.0" width="2" height="1.6" fill="#ffd700"/><rect x="2456" y="344.0" width="1" height="1.6" fill="#ffd700"/><rect x="2436" y="346.0" width="3" height="1.6" fill="#569cd6"/><rect x="2440" y="346.0" width="4" height="1.6" fill="#9cdcfe"/><rect x="2445" y="346.0" width="1" height="1.6" fill="#d4d4d4"/><rect x="2447" y="346.0" width="34" height="1.6" fill="#ce9178"/><rect x="2482" y="346.0" width="1" height="1.6" fill="#d4d4d4"/><rect x="2484" y="346.0" width="5" height="1.6" fill="#ce9178"/><rect x="2489" y="346.0" width="1" height="1.6" fill="#d4d4d4"/><rect x="2436" y="348.0" width="3" height="1.6" fill="#569cd6"/><rect x="2440" y="348.0" width="7" height="1.6" fill="#9cdcfe"/><rect x="2448" y="348.0" width="1" height="1.6" fill="#d4d4d4"/><rect x="2450" y="348.0" width="4" height="1.6" fill="#9cdcfe"/><rect x="2454" y="348.0" width="1" height="1.6" fill="#d4d4d4"/><rect x="2455" y="348.0" width="5" height="1.6" fill="#dcdcaa"/><rect x="2460" y="348.0" width="1" height="1.6" fill="#da70d6"/><rect x="2461" y="348.0" width="2" height="1.6" fill="#ce9178"/><rect x="2463" y="348.0" width="1" height="1.6" fill="#da70d6"/><rect x="2464" y="348.0" width="1" height="1.6" fill="#d4d4d4"/><rect x="2465" y="348.0" width="3" height="1.6" fill="#dcdcaa"/><rect x="2468" y="348.0" width="1" height="1.6" fill="#da70d6"/><rect x="2469" y="348.0" width="1" height="1.6" fill="#179fff"/><rect x="2470" y="348.0" width="1" height="1.6" fill="#9cdcfe"/><rect x="2471" y="348.0" width="1" height="1.6" fill="#d4d4d4"/><rect x="2473" y="348.0" width="1" height="1.6" fill="#9cdcfe"/><rect x="2474" y="348.0" width="1" height="1.6" fill="#179fff"/><rect x="2476" y="348.0" width="2" height="1.6" fill="#d4d4d4"/><rect x="2479" y="348.0" width="1" height="1.6" fill="#179fff"/><rect x="2480" y="348.0" width="1" height="1.6" fill="#ffd700"/><rect x="2482" y="348.0" width="1" height="1.6" fill="#9cdcfe"/><rect x="2483" y="348.0" width="1" height="1.6" fill="#d4d4d4"/><rect x="2485" y="348.0" width="1" height="1.6" fill="#9cdcfe"/><rect x="2486" y="348.0" width="1" height="1.6" fill="#d4d4d4"/><rect x="2488" y="348.0" width="1" height="1.6" fill="#9cdcfe"/><rect x="2490" y="348.0" width="1" height="1.6" fill="#d4d4d4"/><rect x="2492" y="348.0" width="3" height="1.6" fill="#b5cea8"/><rect x="2496" y="348.0" width="1" height="1.6" fill="#ffd700"/><rect x="2497" y="348.0" width="1" height="1.6" fill="#179fff"/><rect x="2498" y="348.0" width="1" height="1.6" fill="#da70d6"/><rect x="2499" y="348.0" width="1" height="1.6" fill="#d4d4d4"/><rect x="2436" y="350.0" width="12" height="1.6" fill="#9cdcfe"/><rect x="2449" y="350.0" width="1" height="1.6" fill="#d4d4d4"/><rect x="2451" y="350.0" width="6" height="1.6" fill="#dcdcaa"/><rect x="2457" y="350.0" width="1" height="1.6" fill="#da70d6"/><rect x="2458" y="350.0" width="7" height="1.6" fill="#9cdcfe"/><rect x="2465" y="350.0" width="1" height="1.6" fill="#d4d4d4"/><rect x="2467" y="350.0" width="2" height="1.6" fill="#b5cea8"/><rect x="2469" y="350.0" width="1" height="1.6" fill="#d4d4d4"/><rect x="2471" y="350.0" width="2" height="1.6" fill="#b5cea8"/><rect x="2474" y="350.0" width="1" height="1.6" fill="#d4d4d4"/><rect x="2476" y="350.0" width="4" height="1.6" fill="#b5cea8"/><rect x="2480" y="350.0" width="1" height="1.6" fill="#d4d4d4"/><rect x="2482" y="350.0" width="2" height="1.6" fill="#b5cea8"/><rect x="2485" y="350.0" width="1" height="1.6" fill="#d4d4d4"/><rect x="2487" y="350.0" width="3" height="1.6" fill="#dcdcaa"/><rect x="2490" y="350.0" width="1" height="1.6" fill="#179fff"/><rect x="2491" y="350.0" width="3" height="1.6" fill="#b5cea8"/><rect x="2494" y="350.0" width="1" height="1.6" fill="#d4d4d4"/><rect x="2496" y="350.0" width="3" height="1.6" fill="#b5cea8"/><rect x="2499" y="350.0" width="1" height="1.6" fill="#179fff"/><rect x="2500" y="350.0" width="1" height="1.6" fill="#da70d6"/><rect x="2501" y="350.0" width="1" height="1.6" fill="#d4d4d4"/><rect x="2436" y="352.0" width="14" height="1.6" fill="#9cdcfe"/><rect x="2451" y="352.0" width="1" height="1.6" fill="#d4d4d4"/><rect x="2453" y="352.0" width="2" height="1.6" fill="#da70d6"/><rect x="2455" y="352.0" width="1" height="1.6" fill="#d4d4d4"/><rect x="2436" y="354.0" width="18" height="1.6" fill="#9cdcfe"/><rect x="2455" y="354.0" width="1" height="1.6" fill="#d4d4d4"/><rect x="2457" y="354.0" width="1" height="1.6" fill="#b5cea8"/><rect x="2458" y="354.0" width="1" height="1.6" fill="#d4d4d4"/><rect x="2434" y="356.0" width="1" height="1.6" fill="#ffd700"/><rect x="2434" y="358.0" width="8" height="1.6" fill="#569cd6"/><rect x="2443" y="358.0" width="10" height="1.6" fill="#dcdcaa"/><rect x="2453" y="358.0" width="1" height="1.6" fill="#ffd700"/><rect x="2454" y="358.0" width="7" height="1.6" fill="#9cdcfe"/><rect x="2461" y="358.0" width="1" height="1.6" fill="#ffd700"/><rect x="2463" y="358.0" width="1" height="1.6" fill="#ffd700"/><rect x="2436" y="360.0" width="2" height="1.6" fill="#c586c0"/><rect x="2439" y="360.0" width="1" height="1.6" fill="#da70d6"/><rect x="2440" y="360.0" width="18" height="1.6" fill="#9cdcfe"/><rect x="2459" y="360.0" width="1" height="1.6" fill="#d4d4d4"/><rect x="2461" y="360.0" width="12" height="1.6" fill="#9cdcfe"/><rect x="2473" y="360.0" width="1" height="1.6" fill="#d4d4d4"/><rect x="2474" y="360.0" width="6" height="1.6" fill="#9cdcfe"/><rect x="2480" y="360.0" width="1" height="1.6" fill="#da70d6"/><rect x="2482" y="360.0" width="1" height="1.6" fill="#da70d6"/><rect x="2438" y="362.0" width="3" height="1.6" fill="#569cd6"/><rect x="2442" y="362.0" width="2" height="1.6" fill="#9cdcfe"/><rect x="2445" y="362.0" width="1" height="1.6" fill="#d4d4d4"/><rect x="2447" y="362.0" width="12" height="1.6" fill="#9cdcfe"/><rect x="2459" y="362.0" width="1" height="1.6" fill="#179fff"/><rect x="2460" y="362.0" width="18" height="1.6" fill="#9cdcfe"/><rect x="2478" y="362.0" width="1" height="1.6" fill="#179fff"/><rect x="2479" y="362.0" width="1" height="1.6" fill="#d4d4d4"/><rect x="2438" y="364.0" width="2" height="1.6" fill="#c586c0"/><rect x="2441" y="364.0" width="1" height="1.6" fill="#179fff"/><rect x="2442" y="364.0" width="7" height="1.6" fill="#9cdcfe"/><rect x="2450" y="364.0" width="2" height="1.6" fill="#d4d4d4"/><rect x="2453" y="364.0" width="2" height="1.6" fill="#9cdcfe"/><rect x="2455" y="364.0" width="1" height="1.6" fill="#d4d4d4"/><rect x="2456" y="364.0" width="1" height="1.6" fill="#9cdcfe"/><rect x="2457" y="364.0" width="1" height="1.6" fill="#179fff"/><rect x="2459" y="364.0" width="1" height="1.6" fill="#179fff"/><rect x="2440" y="366.0" width="14" height="1.6" fill="#9cdcfe"/><rect x="2454" y="366.0" width="1" height="1.6" fill="#d4d4d4"/><rect x="2455" y="366.0" width="4" height="1.6" fill="#dcdcaa"/><rect x="2459" y="366.0" width="1" height="1.6" fill="#ffd700"/><rect x="2460" y="366.0" width="1" height="1.6" fill="#da70d6"/><rect x="2462" y="366.0" width="4" height="1.6" fill="#9cdcfe"/><rect x="2466" y="366.0" width="1" height="1.6" fill="#d4d4d4"/><rect x="2468" y="366.0" width="2" height="1.6" fill="#9cdcfe"/><rect x="2470" y="366.0" width="1" height="1.6" fill="#d4d4d4"/><rect x="2471" y="366.0" width="1" height="1.6" fill="#9cdcfe"/><rect x="2472" y="366.0" width="1" height="1.6" fill="#d4d4d4"/><rect x="2474" y="366.0" width="1" height="1.6" fill="#9cdcfe"/><rect x="2475" y="366.0" width="1" height="1.6" fill="#d4d4d4"/><rect x="2477" y="366.0" width="6" height="1.6" fill="#dcdcaa"/><rect x="2483" y="366.0" width="1" height="1.6" fill="#179fff"/><rect x="2484" y="366.0" width="2" height="1.6" fill="#b5cea8"/><rect x="2486" y="366.0" width="1" height="1.6" fill="#d4d4d4"/><rect x="2488" y="366.0" width="5" height="1.6" fill="#9cdcfe"/><rect x="2494" y="366.0" width="1" height="1.6" fill="#d4d4d4"/><rect x="2496" y="366.0" width="2" height="1.6" fill="#b5cea8"/><rect x="2498" y="366.0" width="1" height="1.6" fill="#179fff"/><rect x="2499" y="366.0" width="1" height="1.6" fill="#d4d4d4"/><rect x="2501" y="366.0" width="1" height="1.6" fill="#9cdcfe"/><rect x="2502" y="366.0" width="1" height="1.6" fill="#d4d4d4"/><rect x="2504" y="366.0" width="6" height="1.6" fill="#dcdcaa"/><rect x="2510" y="366.0" width="1" height="1.6" fill="#179fff"/><rect x="2511" y="366.0" width="2" height="1.6" fill="#b5cea8"/><rect x="2513" y="366.0" width="1" height="1.6" fill="#d4d4d4"/><rect x="2515" y="366.0" width="6" height="1.6" fill="#9cdcfe"/><rect x="2522" y="366.0" width="1" height="1.6" fill="#d4d4d4"/><rect x="2524" y="366.0" width="2" height="1.6" fill="#b5cea8"/><rect x="2526" y="366.0" width="1" height="1.6" fill="#179fff"/><rect x="2527" y="366.0" width="1" height="1.6" fill="#d4d4d4"/><rect x="2529" y="366.0" width="5" height="1.6" fill="#9cdcfe"/><rect x="2534" y="366.0" width="1" height="1.6" fill="#d4d4d4"/><rect x="2536" y="366.0" width="3" height="1.6" fill="#b5cea8"/><rect x="2540" y="366.0" width="1" height="1.6" fill="#da70d6"/><rect x="2541" y="366.0" width="1" height="1.6" fill="#ffd700"/><rect x="2542" y="366.0" width="1" height="1.6" fill="#d4d4d4"/><rect x="2440" y="368.0" width="18" height="1.6" fill="#9cdcfe"/><rect x="2458" y="368.0" width="3" height="1.6" fill="#d4d4d4"/><rect x="2438" y="370.0" width="1" height="1.6" fill="#179fff"/><rect x="2436" y="372.0" width="1" height="1.6" fill="#da70d6"/><rect x="2436" y="374.0" width="3" height="1.6" fill="#c586c0"/><rect x="2440" y="374.0" width="1" height="1.6" fill="#da70d6"/><rect x="2441" y="374.0" width="3" height="1.6" fill="#569cd6"/><rect x="2445" y="374.0" width="1" height="1.6" fill="#9cdcfe"/><rect x="2447" y="374.0" width="2" height="1.6" fill="#569cd6"/><rect x="2450" y="374.0" width="14" height="1.6" fill="#9cdcfe"/><rect x="2464" y="374.0" width="1" height="1.6" fill="#da70d6"/><rect x="2466" y="374.0" width="1" height="1.6" fill="#da70d6"/><rect x="2438" y="376.0" width="4" height="1.6" fill="#dcdcaa"/><rect x="2442" y="376.0" width="1" height="1.6" fill="#179fff"/><rect x="2443" y="376.0" width="3" height="1.6" fill="#b5cea8"/><rect x="2446" y="376.0" width="1" height="1.6" fill="#d4d4d4"/><rect x="2448" y="376.0" width="1" height="1.6" fill="#9cdcfe"/><rect x="2449" y="376.0" width="1" height="1.6" fill="#d4d4d4"/><rect x="2450" y="376.0" width="5" height="1.6" fill="#9cdcfe"/><rect x="2455" y="376.0" width="1" height="1.6" fill="#179fff"/><rect x="2456" y="376.0" width="1" height="1.6" fill="#d4d4d4"/><rect x="2438" y="378.0" width="4" height="1.6" fill="#dcdcaa"/><rect x="2442" y="378.0" width="1" height="1.6" fill="#179fff"/><rect x="2443" y="378.0" width="1" height="1.6" fill="#9cdcfe"/><rect x="2444" y="378.0" width="1" height="1.6" fill="#d4d4d4"/><rect x="2445" y="378.0" width="1" height="1.6" fill="#9cdcfe"/><rect x="2446" y="378.0" width="1" height="1.6" fill="#d4d4d4"/><rect x="2448" y="378.0" width="1" height="1.6" fill="#9cdcfe"/><rect x="2449" y="378.0" width="1" height="1.6" fill="#d4d4d4"/><rect x="2450" y="378.0" width="1" height="1.6" fill="#9cdcfe"/><rect x="2451" y="378.0" width="1" height="1.6" fill="#d4d4d4"/><rect x="2453" y="378.0" width="1" height="1.6" fill="#9cdcfe"/><rect x="2454" y="378.0" width="1" height="1.6" fill="#d4d4d4"/><rect x="2455" y="378.0" width="1" height="1.6" fill="#9cdcfe"/><rect x="2456" y="378.0" width="1" height="1.6" fill="#179fff"/><rect x="2457" y="378.0" width="1" height="1.6" fill="#d4d4d4"/><rect x="2438" y="380.0" width="1" height="1.6" fill="#9cdcfe"/><rect x="2439" y="380.0" width="1" height="1.6" fill="#d4d4d4"/><rect x="2440" y="380.0" width="5" height="1.6" fill="#9cdcfe"/><rect x="2446" y="380.0" width="2" height="1.6" fill="#d4d4d4"/><rect x="2449" y="380.0" width="1" height="1.6" fill="#b5cea8"/><rect x="2450" y="380.0" width="1" height="1.6" fill="#d4d4d4"/><rect x="2436" y="382.0" width="1" height="1.6" fill="#da70d6"/><rect x="2436" y="384.0" width="14" height="1.6" fill="#9cdcfe"/><rect x="2451" y="384.0" width="1" height="1.6" fill="#d4d4d4"/><rect x="2453" y="384.0" width="14" height="1.6" fill="#9cdcfe"/><rect x="2467" y="384.0" width="1" height="1.6" fill="#d4d4d4"/><rect x="2468" y="384.0" width="6" height="1.6" fill="#dcdcaa"/><rect x="2474" y="384.0" width="1" height="1.6" fill="#da70d6"/><rect x="2475" y="384.0" width="1" height="1.6" fill="#9cdcfe"/><rect x="2477" y="384.0" width="2" height="1.6" fill="#d4d4d4"/><rect x="2480" y="384.0" width="1" height="1.6" fill="#9cdcfe"/><rect x="2481" y="384.0" width="1" height="1.6" fill="#d4d4d4"/><rect x="2482" y="384.0" width="5" height="1.6" fill="#9cdcfe"/><rect x="2488" y="384.0" width="1" height="1.6" fill="#d4d4d4"/><rect x="2490" y="384.0" width="1" height="1.6" fill="#b5cea8"/><rect x="2491" y="384.0" width="1" height="1.6" fill="#da70d6"/><rect x="2492" y="384.0" width="1" height="1.6" fill="#d4d4d4"/><rect x="2434" y="386.0" width="1" height="1.6" fill="#ffd700"/><rect x="2434" y="390.0" width="8" height="1.6" fill="#569cd6"/><rect x="2443" y="390.0" width="11" height="1.6" fill="#dcdcaa"/><rect x="2454" y="390.0" width="2" height="1.6" fill="#ffd700"/><rect x="2457" y="390.0" width="1" height="1.6" fill="#ffd700"/><rect x="2436" y="392.0" width="7" height="1.6" fill="#9cdcfe"/><rect x="2444" y="392.0" width="1" height="1.6" fill="#d4d4d4"/><rect x="2446" y="392.0" width="2" height="1.6" fill="#da70d6"/><rect x="2448" y="392.0" width="1" height="1.6" fill="#d4d4d4"/><rect x="2436" y="394.0" width="3" height="1.6" fill="#c586c0"/><rect x="2440" y="394.0" width="1" height="1.6" fill="#da70d6"/><rect x="2441" y="394.0" width="3" height="1.6" fill="#569cd6"/><rect x="2445" y="394.0" width="1" height="1.6" fill="#9cdcfe"/><rect x="2447" y="394.0" width="1" height="1.6" fill="#d4d4d4"/><rect x="2449" y="394.0" width="1" height="1.6" fill="#b5cea8"/><rect x="2450" y="394.0" width="1" height="1.6" fill="#d4d4d4"/><rect x="2452" y="394.0" width="1" height="1.6" fill="#9cdcfe"/><rect x="2454" y="394.0" width="1" height="1.6" fill="#d4d4d4"/><rect x="2456" y="394.0" width="2" height="1.6" fill="#b5cea8"/><rect x="2458" y="394.0" width="1" height="1.6" fill="#d4d4d4"/><rect x="2460" y="394.0" width="1" height="1.6" fill="#9cdcfe"/><rect x="2461" y="394.0" width="2" height="1.6" fill="#d4d4d4"/><rect x="2463" y="394.0" width="1" height="1.6" fill="#da70d6"/><rect x="2465" y="394.0" width="1" height="1.6" fill="#da70d6"/><rect x="2438" y="396.0" width="7" height="1.6" fill="#9cdcfe"/><rect x="2445" y="396.0" width="1" height="1.6" fill="#d4d4d4"/><rect x="2446" y="396.0" width="4" height="1.6" fill="#dcdcaa"/><rect x="2450" y="396.0" width="1" height="1.6" fill="#179fff"/><rect x="2451" y="396.0" width="1" height="1.6" fill="#ffd700"/><rect x="2453" y="396.0" width="1" height="1.6" fill="#9cdcfe"/><rect x="2454" y="396.0" width="1" height="1.6" fill="#d4d4d4"/><rect x="2456" y="396.0" width="6" height="1.6" fill="#dcdcaa"/><rect x="2462" y="396.0" width="1" height="1.6" fill="#da70d6"/><rect x="2463" y="396.0" width="5" height="1.6" fill="#9cdcfe"/><rect x="2468" y="396.0" width="1" height="1.6" fill="#da70d6"/><rect x="2469" y="396.0" width="1" height="1.6" fill="#d4d4d4"/><rect x="2471" y="396.0" width="1" height="1.6" fill="#9cdcfe"/><rect x="2472" y="396.0" width="1" height="1.6" fill="#d4d4d4"/><rect x="2474" y="396.0" width="6" height="1.6" fill="#dcdcaa"/><rect x="2480" y="396.0" width="1" height="1.6" fill="#da70d6"/><rect x="2481" y="396.0" width="6" height="1.6" fill="#9cdcfe"/><rect x="2487" y="396.0" width="1" height="1.6" fill="#da70d6"/><rect x="2488" y="396.0" width="1" height="1.6" fill="#d4d4d4"/><rect x="2490" y="396.0" width="1" height="1.6" fill="#9cdcfe"/><rect x="2491" y="396.0" width="1" height="1.6" fill="#d4d4d4"/><rect x="2493" y="396.0" width="1" height="1.6" fill="#b5cea8"/><rect x="2495" y="396.0" width="1" height="1.6" fill="#ffd700"/><rect x="2496" y="396.0" width="1" height="1.6" fill="#179fff"/><rect x="2497" y="396.0" width="1" height="1.6" fill="#d4d4d4"/><rect x="2436" y="398.0" width="1" height="1.6" fill="#da70d6"/><rect x="2434" y="400.0" width="1" height="1.6" fill="#ffd700"/><rect x="2434" y="402.0" width="8" height="1.6" fill="#569cd6"/><rect x="2443" y="402.0" width="11" height="1.6" fill="#dcdcaa"/><rect x="2454" y="402.0" width="1" height="1.6" fill="#ffd700"/><rect x="2455" y="402.0" width="7" height="1.6" fill="#9cdcfe"/><rect x="2462" y="402.0" width="1" height="1.6" fill="#ffd700"/><rect x="2464" y="402.0" width="1" height="1.6" fill="#ffd700"/><rect x="2436" y="404.0" width="6" height="1.6" fill="#dcdcaa"/><rect x="2442" y="404.0" width="2" height="1.6" fill="#da70d6"/><rect x="2444" y="404.0" width="1" height="1.6" fill="#d4d4d4"/><rect x="2436" y="406.0" width="6" height="1.6" fill="#dcdcaa"/><rect x="2442" y="406.0" width="1" height="1.6" fill="#da70d6"/><rect x="2443" y="406.0" width="3" height="1.6" fill="#b5cea8"/><rect x="2446" y="406.0" width="1" height="1.6" fill="#da70d6"/><rect x="2447" y="406.0" width="1" height="1.6" fill="#d4d4d4"/><rect x="2436" y="408.0" width="3" height="1.6" fill="#c586c0"/><rect x="2440" y="408.0" width="1" height="1.6" fill="#da70d6"/><rect x="2441" y="408.0" width="3" height="1.6" fill="#569cd6"/><rect x="2445" y="408.0" width="1" height="1.6" fill="#9cdcfe"/><rect x="2447" y="408.0" width="2" height="1.6" fill="#569cd6"/><rect x="2450" y="408.0" width="7" height="1.6" fill="#9cdcfe"/><rect x="2457" y="408.0" width="1" height="1.6" fill="#da70d6"/><rect x="2459" y="408.0" width="1" height="1.6" fill="#da70d6"/><rect x="2438" y="410.0" width="7" height="1.6" fill="#dcdcaa"/><rect x="2445" y="410.0" width="1" height="1.6" fill="#179fff"/><rect x="2446" y="410.0" width="1" height="1.6" fill="#9cdcfe"/><rect x="2447" y="410.0" width="1" height="1.6" fill="#d4d4d4"/><rect x="2448" y="410.0" width="1" height="1.6" fill="#9cdcfe"/><rect x="2449" y="410.0" width="1" height="1.6" fill="#d4d4d4"/><rect x="2451" y="410.0" width="1" height="1.6" fill="#9cdcfe"/><rect x="2452" y="410.0" width="1" height="1.6" fill="#d4d4d4"/><rect x="2453" y="410.0" width="1" height="1.6" fill="#9cdcfe"/><rect x="2454" y="410.0" width="1" height="1.6" fill="#d4d4d4"/><rect x="2456" y="410.0" width="1" height="1.6" fill="#9cdcfe"/><rect x="2457" y="410.0" width="1" height="1.6" fill="#d4d4d4"/><rect x="2458" y="410.0" width="1" height="1.6" fill="#9cdcfe"/><rect x="2459" y="410.0" width="1" height="1.6" fill="#179fff"/><rect x="2460" y="410.0" width="1" height="1.6" fill="#d4d4d4"/><rect x="2438" y="412.0" width="1" height="1.6" fill="#9cdcfe"/><rect x="2439" y="412.0" width="1" height="1.6" fill="#d4d4d4"/><rect x="2440" y="412.0" width="1" height="1.6" fill="#9cdcfe"/><rect x="2442" y="412.0" width="2" height="1.6" fill="#d4d4d4"/><rect x="2445" y="412.0" width="1" height="1.6" fill="#b5cea8"/><rect x="2446" y="412.0" width="1" height="1.6" fill="#d4d4d4"/><rect x="2436" y="414.0" width="1" height="1.6" fill="#da70d6"/><rect x="2436" y="416.0" width="6" height="1.6" fill="#dcdcaa"/><rect x="2442" y="416.0" width="1" height="1.6" fill="#da70d6"/><rect x="2443" y="416.0" width="4" height="1.6" fill="#4fc1ff"/><rect x="2447" y="416.0" width="1" height="1.6" fill="#da70d6"/><rect x="2448" y="416.0" width="1" height="1.6" fill="#d4d4d4"/><rect x="2434" y="418.0" width="1" height="1.6" fill="#ffd700"/><rect x="2434" y="422.0" width="8" height="1.6" fill="#569cd6"/><rect x="2443" y="422.0" width="24" height="1.6" fill="#dcdcaa"/><rect x="2467" y="422.0" width="2" height="1.6" fill="#ffd700"/><rect x="2470" y="422.0" width="1" height="1.6" fill="#ffd700"/><rect x="2436" y="424.0" width="3" height="1.6" fill="#569cd6"/><rect x="2440" y="424.0" width="8" height="1.6" fill="#9cdcfe"/><rect x="2449" y="424.0" width="1" height="1.6" fill="#d4d4d4"/><rect x="2451" y="424.0" width="3" height="1.6" fill="#9cdcfe"/><rect x="2454" y="424.0" width="1" height="1.6" fill="#d4d4d4"/><rect x="2455" y="424.0" width="7" height="1.6" fill="#dcdcaa"/><rect x="2462" y="424.0" width="2" height="1.6" fill="#da70d6"/><rect x="2464" y="424.0" width="1" height="1.6" fill="#d4d4d4"/><rect x="2436" y="426.0" width="4" height="1.6" fill="#dcdcaa"/><rect x="2440" y="426.0" width="2" height="1.6" fill="#da70d6"/><rect x="2442" y="426.0" width="1" height="1.6" fill="#d4d4d4"/><rect x="2436" y="428.0" width="9" height="1.6" fill="#dcdcaa"/><rect x="2445" y="428.0" width="1" height="1.6" fill="#da70d6"/><rect x="2446" y="428.0" width="5" height="1.6" fill="#9cdcfe"/><rect x="2452" y="428.0" width="1" height="1.6" fill="#d4d4d4"/><rect x="2454" y="428.0" width="1" height="1.6" fill="#b5cea8"/><rect x="2455" y="428.0" width="1" height="1.6" fill="#d4d4d4"/><rect x="2457" y="428.0" width="6" height="1.6" fill="#9cdcfe"/><rect x="2464" y="428.0" width="1" height="1.6" fill="#d4d4d4"/><rect x="2466" y="428.0" width="1" height="1.6" fill="#b5cea8"/><rect x="2467" y="428.0" width="1" height="1.6" fill="#da70d6"/><rect x="2468" y="428.0" width="1" height="1.6" fill="#d4d4d4"/><rect x="2436" y="432.0" width="4" height="1.6" fill="#dcdcaa"/><rect x="2440" y="432.0" width="1" height="1.6" fill="#da70d6"/><rect x="2441" y="432.0" width="1" height="1.6" fill="#b5cea8"/><rect x="2442" y="432.0" width="1" height="1.6" fill="#da70d6"/><rect x="2443" y="432.0" width="1" height="1.6" fill="#d4d4d4"/><rect x="2436" y="434.0" width="7" height="1.6" fill="#dcdcaa"/><rect x="2443" y="434.0" width="1" height="1.6" fill="#da70d6"/><rect x="2444" y="434.0" width="1" height="1.6" fill="#b5cea8"/><rect x="2445" y="434.0" width="1" height="1.6" fill="#d4d4d4"/><rect x="2447" y="434.0" width="1" height="1.6" fill="#b5cea8"/><rect x="2448" y="434.0" width="1" height="1.6" fill="#d4d4d4"/><rect x="2450" y="434.0" width="3" height="1.6" fill="#b5cea8"/><rect x="2453" y="434.0" width="1" height="1.6" fill="#da70d6"/><rect x="2454" y="434.0" width="1" height="1.6" fill="#d4d4d4"/><rect x="2436" y="438.0" width="8" height="1.6" fill="#dcdcaa"/><rect x="2444" y="438.0" width="2" height="1.6" fill="#da70d6"/><rect x="2446" y="438.0" width="1" height="1.6" fill="#d4d4d4"/><rect x="2436" y="440.0" width="4" height="1.6" fill="#dcdcaa"/><rect x="2440" y="440.0" width="1" height="1.6" fill="#da70d6"/><rect x="2441" y="440.0" width="2" height="1.6" fill="#b5cea8"/><rect x="2443" y="440.0" width="1" height="1.6" fill="#da70d6"/><rect x="2444" y="440.0" width="1" height="1.6" fill="#d4d4d4"/><rect x="2436" y="442.0" width="7" height="1.6" fill="#dcdcaa"/><rect x="2443" y="442.0" width="1" height="1.6" fill="#da70d6"/><rect x="2444" y="442.0" width="1" height="1.6" fill="#b5cea8"/><rect x="2445" y="442.0" width="1" height="1.6" fill="#d4d4d4"/><rect x="2447" y="442.0" width="1" height="1.6" fill="#b5cea8"/><rect x="2448" y="442.0" width="1" height="1.6" fill="#d4d4d4"/><rect x="2450" y="442.0" width="2" height="1.6" fill="#b5cea8"/><rect x="2452" y="442.0" width="1" height="1.6" fill="#da70d6"/><rect x="2453" y="442.0" width="1" height="1.6" fill="#d4d4d4"/><rect x="2436" y="446.0" width="6" height="1.6" fill="#dcdcaa"/><rect x="2442" y="446.0" width="1" height="1.6" fill="#da70d6"/><rect x="2443" y="446.0" width="3" height="1.6" fill="#b5cea8"/><rect x="2446" y="446.0" width="1" height="1.6" fill="#d4d4d4"/><rect x="2448" y="446.0" width="2" height="1.6" fill="#b5cea8"/><rect x="2450" y="446.0" width="1" height="1.6" fill="#da70d6"/><rect x="2451" y="446.0" width="1" height="1.6" fill="#d4d4d4"/><rect x="2436" y="448.0" width="12" height="1.6" fill="#dcdcaa"/><rect x="2448" y="448.0" width="1" height="1.6" fill="#da70d6"/><rect x="2449" y="448.0" width="1" height="1.6" fill="#b5cea8"/><rect x="2450" y="448.0" width="1" height="1.6" fill="#da70d6"/><rect x="2451" y="448.0" width="1" height="1.6" fill="#d4d4d4"/><rect x="2436" y="450.0" width="3" height="1.6" fill="#569cd6"/><rect x="2440" y="450.0" width="2" height="1.6" fill="#9cdcfe"/><rect x="2443" y="450.0" width="1" height="1.6" fill="#d4d4d4"/><rect x="2445" y="450.0" width="3" height="1.6" fill="#b5cea8"/><rect x="2448" y="450.0" width="1" height="1.6" fill="#d4d4d4"/><rect x="2436" y="452.0" width="3" height="1.6" fill="#569cd6"/><rect x="2440" y="452.0" width="2" height="1.6" fill="#9cdcfe"/><rect x="2443" y="452.0" width="1" height="1.6" fill="#d4d4d4"/><rect x="2445" y="452.0" width="3" height="1.6" fill="#b5cea8"/><rect x="2448" y="452.0" width="1" height="1.6" fill="#d4d4d4"/><rect x="2436" y="454.0" width="3" height="1.6" fill="#569cd6"/><rect x="2440" y="454.0" width="2" height="1.6" fill="#9cdcfe"/><rect x="2443" y="454.0" width="1" height="1.6" fill="#d4d4d4"/><rect x="2445" y="454.0" width="2" height="1.6" fill="#b5cea8"/><rect x="2447" y="454.0" width="1" height="1.6" fill="#d4d4d4"/><rect x="2436" y="456.0" width="3" height="1.6" fill="#569cd6"/><rect x="2440" y="456.0" width="2" height="1.6" fill="#9cdcfe"/><rect x="2443" y="456.0" width="1" height="1.6" fill="#d4d4d4"/><rect x="2445" y="456.0" width="2" height="1.6" fill="#b5cea8"/><rect x="2447" y="456.0" width="1" height="1.6" fill="#d4d4d4"/><rect x="2436" y="458.0" width="3" height="1.6" fill="#569cd6"/><rect x="2440" y="458.0" width="2" height="1.6" fill="#9cdcfe"/><rect x="2443" y="458.0" width="1" height="1.6" fill="#d4d4d4"/><rect x="2445" y="458.0" width="2" height="1.6" fill="#b5cea8"/><rect x="2447" y="458.0" width="1" height="1.6" fill="#d4d4d4"/><rect x="2436" y="462.0" width="4" height="1.6" fill="#dcdcaa"/><rect x="2440" y="462.0" width="1" height="1.6" fill="#da70d6"/><rect x="2441" y="462.0" width="9" height="1.6" fill="#9cdcfe"/><rect x="2450" y="462.0" width="1" height="1.6" fill="#d4d4d4"/><rect x="2452" y="462.0" width="5" height="1.6" fill="#9cdcfe"/><rect x="2457" y="462.0" width="1" height="1.6" fill="#d4d4d4"/><rect x="2459" y="462.0" width="5" height="1.6" fill="#9cdcfe"/><rect x="2464" y="462.0" width="1" height="1.6" fill="#d4d4d4"/><rect x="2466" y="462.0" width="5" height="1.6" fill="#9cdcfe"/><rect x="2471" y="462.0" width="1" height="1.6" fill="#da70d6"/><rect x="2472" y="462.0" width="1" height="1.6" fill="#d4d4d4"/><rect x="2436" y="464.0" width="4" height="1.6" fill="#dcdcaa"/><rect x="2440" y="464.0" width="1" height="1.6" fill="#da70d6"/><rect x="2441" y="464.0" width="5" height="1.6" fill="#9cdcfe"/><rect x="2446" y="464.0" width="1" height="1.6" fill="#d4d4d4"/><rect x="2448" y="464.0" width="5" height="1.6" fill="#9cdcfe"/><rect x="2453" y="464.0" width="1" height="1.6" fill="#d4d4d4"/><rect x="2455" y="464.0" width="5" height="1.6" fill="#9cdcfe"/><rect x="2460" y="464.0" width="1" height="1.6" fill="#d4d4d4"/><rect x="2462" y="464.0" width="4" height="1.6" fill="#9cdcfe"/><rect x="2466" y="464.0" width="1" height="1.6" fill="#da70d6"/><rect x="2467" y="464.0" width="1" height="1.6" fill="#d4d4d4"/><rect x="2436" y="466.0" width="7" height="1.6" fill="#dcdcaa"/><rect x="2443" y="466.0" width="1" height="1.6" fill="#da70d6"/><rect x="2444" y="466.0" width="7" height="1.6" fill="#9cdcfe"/><rect x="2451" y="466.0" width="1" height="1.6" fill="#d4d4d4"/><rect x="2453" y="466.0" width="7" height="1.6" fill="#9cdcfe"/><rect x="2460" y="466.0" width="1" height="1.6" fill="#d4d4d4"/><rect x="2462" y="466.0" width="1" height="1.6" fill="#b5cea8"/><rect x="2463" y="466.0" width="1" height="1.6" fill="#da70d6"/><rect x="2464" y="466.0" width="1" height="1.6" fill="#d4d4d4"/><rect x="2436" y="470.0" width="6" height="1.6" fill="#dcdcaa"/><rect x="2442" y="470.0" width="1" height="1.6" fill="#da70d6"/><rect x="2443" y="470.0" width="11" height="1.6" fill="#9cdcfe"/><rect x="2454" y="470.0" width="1" height="1.6" fill="#da70d6"/><rect x="2455" y="470.0" width="1" height="1.6" fill="#d4d4d4"/><rect x="2436" y="472.0" width="6" height="1.6" fill="#dcdcaa"/><rect x="2442" y="472.0" width="2" height="1.6" fill="#da70d6"/><rect x="2444" y="472.0" width="1" height="1.6" fill="#d4d4d4"/><rect x="2436" y="474.0" width="6" height="1.6" fill="#dcdcaa"/><rect x="2442" y="474.0" width="1" height="1.6" fill="#da70d6"/><rect x="2443" y="474.0" width="3" height="1.6" fill="#b5cea8"/><rect x="2446" y="474.0" width="1" height="1.6" fill="#da70d6"/><rect x="2447" y="474.0" width="1" height="1.6" fill="#d4d4d4"/><rect x="2436" y="476.0" width="12" height="1.6" fill="#dcdcaa"/><rect x="2448" y="476.0" width="1" height="1.6" fill="#da70d6"/><rect x="2449" y="476.0" width="1" height="1.6" fill="#b5cea8"/><rect x="2450" y="476.0" width="1" height="1.6" fill="#da70d6"/><rect x="2451" y="476.0" width="1" height="1.6" fill="#d4d4d4"/><rect x="2436" y="478.0" width="3" height="1.6" fill="#dcdcaa"/><rect x="2439" y="478.0" width="1" height="1.6" fill="#da70d6"/><rect x="2440" y="478.0" width="1" height="1.6" fill="#b5cea8"/><rect x="2441" y="478.0" width="1" height="1.6" fill="#d4d4d4"/><rect x="2443" y="478.0" width="1" height="1.6" fill="#b5cea8"/><rect x="2444" y="478.0" width="1" height="1.6" fill="#da70d6"/><rect x="2445" y="478.0" width="1" height="1.6" fill="#d4d4d4"/><rect x="2436" y="480.0" width="3" height="1.6" fill="#c586c0"/><rect x="2440" y="480.0" width="1" height="1.6" fill="#da70d6"/><rect x="2441" y="480.0" width="3" height="1.6" fill="#569cd6"/><rect x="2445" y="480.0" width="1" height="1.6" fill="#9cdcfe"/><rect x="2447" y="480.0" width="1" height="1.6" fill="#d4d4d4"/><rect x="2449" y="480.0" width="1" height="1.6" fill="#b5cea8"/><rect x="2450" y="480.0" width="1" height="1.6" fill="#d4d4d4"/><rect x="2452" y="480.0" width="1" height="1.6" fill="#9cdcfe"/><rect x="2454" y="480.0" width="1" height="1.6" fill="#d4d4d4"/><rect x="2456" y="480.0" width="8" height="1.6" fill="#9cdcfe"/><rect x="2464" y="480.0" width="1" height="1.6" fill="#d4d4d4"/><rect x="2465" y="480.0" width="6" height="1.6" fill="#9cdcfe"/><rect x="2471" y="480.0" width="1" height="1.6" fill="#d4d4d4"/><rect x="2473" y="480.0" width="1" height="1.6" fill="#9cdcfe"/><rect x="2475" y="480.0" width="2" height="1.6" fill="#d4d4d4"/><rect x="2478" y="480.0" width="2" height="1.6" fill="#b5cea8"/><rect x="2480" y="480.0" width="1" height="1.6" fill="#da70d6"/><rect x="2482" y="480.0" width="1" height="1.6" fill="#da70d6"/><rect x="2438" y="482.0" width="3" height="1.6" fill="#569cd6"/><rect x="2442" y="482.0" width="3" height="1.6" fill="#9cdcfe"/><rect x="2446" y="482.0" width="1" height="1.6" fill="#d4d4d4"/><rect x="2448" y="482.0" width="3" height="1.6" fill="#dcdcaa"/><rect x="2451" y="482.0" width="1" height="1.6" fill="#179fff"/><rect x="2452" y="482.0" width="8" height="1.6" fill="#9cdcfe"/><rect x="2460" y="482.0" width="1" height="1.6" fill="#ffd700"/><rect x="2461" y="482.0" width="1" height="1.6" fill="#9cdcfe"/><rect x="2462" y="482.0" width="1" height="1.6" fill="#ffd700"/><rect x="2463" y="482.0" width="1" height="1.6" fill="#d4d4d4"/><rect x="2465" y="482.0" width="1" height="1.6" fill="#b5cea8"/><rect x="2466" y="482.0" width="1" height="1.6" fill="#d4d4d4"/><rect x="2468" y="482.0" width="3" height="1.6" fill="#b5cea8"/><rect x="2471" y="482.0" width="1" height="1.6" fill="#d4d4d4"/><rect x="2473" y="482.0" width="1" height="1.6" fill="#b5cea8"/><rect x="2474" y="482.0" width="1" height="1.6" fill="#d4d4d4"/><rect x="2476" y="482.0" width="3" height="1.6" fill="#b5cea8"/><rect x="2479" y="482.0" width="1" height="1.6" fill="#179fff"/><rect x="2480" y="482.0" width="1" height="1.6" fill="#d4d4d4"/><rect x="2438" y="484.0" width="3" height="1.6" fill="#569cd6"/><rect x="2442" y="484.0" width="1" height="1.6" fill="#9cdcfe"/><rect x="2444" y="484.0" width="1" height="1.6" fill="#d4d4d4"/><rect x="2446" y="484.0" width="3" height="1.6" fill="#dcdcaa"/><rect x="2449" y="484.0" width="1" height="1.6" fill="#179fff"/><rect x="2450" y="484.0" width="1" height="1.6" fill="#9cdcfe"/><rect x="2451" y="484.0" width="1" height="1.6" fill="#179fff"/><rect x="2453" y="484.0" width="1" height="1.6" fill="#d4d4d4"/><rect x="2455" y="484.0" width="3" height="1.6" fill="#9cdcfe"/><rect x="2459" y="484.0" width="1" height="1.6" fill="#d4d4d4"/><rect x="2461" y="484.0" width="8" height="1.6" fill="#9cdcfe"/><rect x="2469" y="484.0" width="1" height="1.6" fill="#d4d4d4"/><rect x="2438" y="486.0" width="3" height="1.6" fill="#569cd6"/><rect x="2442" y="486.0" width="1" height="1.6" fill="#9cdcfe"/><rect x="2444" y="486.0" width="1" height="1.6" fill="#d4d4d4"/><rect x="2446" y="486.0" width="3" height="1.6" fill="#dcdcaa"/><rect x="2449" y="486.0" width="1" height="1.6" fill="#179fff"/><rect x="2450" y="486.0" width="1" height="1.6" fill="#9cdcfe"/><rect x="2451" y="486.0" width="1" height="1.6" fill="#179fff"/><rect x="2453" y="486.0" width="1" height="1.6" fill="#d4d4d4"/><rect x="2455" y="486.0" width="3" height="1.6" fill="#9cdcfe"/><rect x="2458" y="486.0" width="1" height="1.6" fill="#d4d4d4"/><rect x="2438" y="488.0" width="4" height="1.6" fill="#dcdcaa"/><rect x="2442" y="488.0" width="1" height="1.6" fill="#179fff"/><rect x="2443" y="488.0" width="1" height="1.6" fill="#b5cea8"/><rect x="2444" y="488.0" width="1" height="1.6" fill="#d4d4d4"/><rect x="2446" y="488.0" width="1" height="1.6" fill="#b5cea8"/><rect x="2447" y="488.0" width="1" height="1.6" fill="#d4d4d4"/><rect x="2449" y="488.0" width="1" height="1.6" fill="#9cdcfe"/><rect x="2450" y="488.0" width="1" height="1.6" fill="#d4d4d4"/><rect x="2452" y="488.0" width="1" height="1.6" fill="#9cdcfe"/><rect x="2453" y="488.0" width="1" height="1.6" fill="#179fff"/><rect x="2454" y="488.0" width="1" height="1.6" fill="#d4d4d4"/><rect x="2436" y="490.0" width="1" height="1.6" fill="#da70d6"/><rect x="2436" y="492.0" width="6" height="1.6" fill="#dcdcaa"/><rect x="2442" y="492.0" width="1" height="1.6" fill="#da70d6"/><rect x="2443" y="492.0" width="3" height="1.6" fill="#b5cea8"/><rect x="2446" y="492.0" width="1" height="1.6" fill="#da70d6"/><rect x="2447" y="492.0" width="1" height="1.6" fill="#d4d4d4"/><rect x="2436" y="494.0" width="6" height="1.6" fill="#dcdcaa"/><rect x="2442" y="494.0" width="2" height="1.6" fill="#da70d6"/><rect x="2444" y="494.0" width="1" height="1.6" fill="#d4d4d4"/><rect x="2436" y="496.0" width="7" height="1.6" fill="#dcdcaa"/><rect x="2443" y="496.0" width="1" height="1.6" fill="#da70d6"/><rect x="2444" y="496.0" width="1" height="1.6" fill="#b5cea8"/><rect x="2445" y="496.0" width="1" height="1.6" fill="#d4d4d4"/><rect x="2447" y="496.0" width="1" height="1.6" fill="#b5cea8"/><rect x="2448" y="496.0" width="1" height="1.6" fill="#d4d4d4"/><rect x="2450" y="496.0" width="3" height="1.6" fill="#b5cea8"/><rect x="2453" y="496.0" width="1" height="1.6" fill="#da70d6"/><rect x="2454" y="496.0" width="1" height="1.6" fill="#d4d4d4"/><rect x="2436" y="498.0" width="4" height="1.6" fill="#dcdcaa"/><rect x="2440" y="498.0" width="1" height="1.6" fill="#da70d6"/><rect x="2441" y="498.0" width="3" height="1.6" fill="#b5cea8"/><rect x="2444" y="498.0" width="1" height="1.6" fill="#d4d4d4"/><rect x="2446" y="498.0" width="1" height="1.6" fill="#b5cea8"/><rect x="2447" y="498.0" width="1" height="1.6" fill="#d4d4d4"/><rect x="2449" y="498.0" width="1" height="1.6" fill="#b5cea8"/><rect x="2450" y="498.0" width="1" height="1.6" fill="#da70d6"/><rect x="2451" y="498.0" width="1" height="1.6" fill="#d4d4d4"/><rect x="2436" y="500.0" width="7" height="1.6" fill="#dcdcaa"/><rect x="2443" y="500.0" width="1" height="1.6" fill="#da70d6"/><rect x="2444" y="500.0" width="1" height="1.6" fill="#b5cea8"/><rect x="2445" y="500.0" width="1" height="1.6" fill="#d4d4d4"/><rect x="2447" y="500.0" width="1" height="1.6" fill="#b5cea8"/><rect x="2448" y="500.0" width="1" height="1.6" fill="#d4d4d4"/><rect x="2450" y="500.0" width="2" height="1.6" fill="#b5cea8"/><rect x="2452" y="500.0" width="1" height="1.6" fill="#da70d6"/><rect x="2453" y="500.0" width="1" height="1.6" fill="#d4d4d4"/><rect x="2436" y="502.0" width="3" height="1.6" fill="#dcdcaa"/><rect x="2439" y="502.0" width="2" height="1.6" fill="#da70d6"/><rect x="2441" y="502.0" width="1" height="1.6" fill="#d4d4d4"/><rect x="2436" y="506.0" width="11" height="1.6" fill="#9cdcfe"/><rect x="2448" y="506.0" width="2" height="1.6" fill="#d4d4d4"/><rect x="2451" y="506.0" width="4" height="1.6" fill="#b5cea8"/><rect x="2455" y="506.0" width="1" height="1.6" fill="#d4d4d4"/><rect x="2434" y="508.0" width="1" height="1.6" fill="#ffd700"/><rect x="2434" y="512.0" width="8" height="1.6" fill="#569cd6"/><rect x="2443" y="512.0" width="12" height="1.6" fill="#dcdcaa"/><rect x="2455" y="512.0" width="2" height="1.6" fill="#ffd700"/><rect x="2458" y="512.0" width="1" height="1.6" fill="#ffd700"/><rect x="2436" y="514.0" width="14" height="1.6" fill="#dcdcaa"/><rect x="2450" y="514.0" width="2" height="1.6" fill="#da70d6"/><rect x="2452" y="514.0" width="1" height="1.6" fill="#d4d4d4"/><rect x="2434" y="516.0" width="1" height="1.6" fill="#ffd700"/></g></svg>
<div class="a" style="left:0;top:81px;width:2559px;height:1332px;overflow:hidden"><div class="a" style="left:0;top:-81px;width:2559px;height:1439px"><div class="a" style="left:428.4px;top:149.08px;width:1px;height:109.20px;background:#404040"></div>
<div class="a" style="left:428.4px;top:607.72px;width:1px;height:109.20px;background:#404040"></div>
<div class="a" style="left:428.4px;top:782.44px;width:1px;height:109.20px;background:#404040"></div>
<div class="a" style="left:428.4px;top:957.16px;width:1px;height:305.76px;background:#404040"></div>
<div class="a" style="left:446.0px;top:1022.68px;width:1px;height:65.52px;background:#404040"></div>
<div class="a" style="left:428.4px;top:1328.44px;width:1px;height:109.20px;background:#404040"></div>
<div class="a" style="left:446.0px;top:1350.28px;width:1px;height:87.36px;background:#404040"></div>
<div class="ln" style="top:108.40px">1</div><div class="cl" style="top:108.40px"><span class="k">let</span><span class="o"> </span><span class="v">sounds</span><span class="o"> = </span><span class="b1">{}</span><span class="o">;</span></div>
<div class="ln" style="top:130.24px">2</div><div class="cl" style="top:130.24px"><span class="k">let</span><span class="o"> </span><span class="v">soundDurations</span><span class="o"> = </span><span class="b1">{</span></div>
<div class="ln" style="top:152.08px">3</div><div class="cl" style="top:152.08px"><span class="o">  </span><span class="s">&#x27;UP&#x27;</span><span class="o">: </span><span class="n">16940</span><span class="o">,</span></div>
<div class="ln" style="top:173.92px">4</div><div class="cl" style="top:173.92px"><span class="o">  </span><span class="s">&#x27;DOWN&#x27;</span><span class="o">: </span><span class="n">95000</span><span class="o">,</span></div>
<div class="ln" style="top:195.76px">5</div><div class="cl" style="top:195.76px"><span class="o">  </span><span class="s">&#x27;LEFT&#x27;</span><span class="o">: </span><span class="n">21630</span><span class="o">,</span></div>
<div class="ln" style="top:217.60px">6</div><div class="cl" style="top:217.60px"><span class="o">  </span><span class="s">&#x27;RIGHT&#x27;</span><span class="o">: </span><span class="n">13700</span><span class="o">,</span></div>
<div class="ln" style="top:239.44px">7</div><div class="cl" style="top:239.44px"><span class="o">  </span><span class="s">&#x27;SPACE&#x27;</span><span class="o">: </span><span class="n">353350</span></div>
<div class="ln" style="top:261.28px">8</div><div class="cl" style="top:261.28px"><span class="b1">}</span><span class="o">;</span></div>
<div class="ln" style="top:283.12px">9</div><div class="cl" style="top:283.12px"></div>
<div class="ln" style="top:304.96px">10</div><div class="cl" style="top:304.96px"><span class="k">let</span><span class="o"> </span><span class="v">currentSound</span><span class="o"> = </span><span class="k">null</span><span class="o">;</span></div>
<div class="ln" style="top:326.80px">11</div><div class="cl" style="top:326.80px"><span class="k">let</span><span class="o"> </span><span class="v">currentKey</span><span class="o"> = </span><span class="k">null</span><span class="o">;</span></div>
<div class="ln" style="top:348.64px">12</div><div class="cl" style="top:348.64px"><span class="k">let</span><span class="o"> </span><span class="v">effectStart</span><span class="o"> = </span><span class="n">0</span><span class="o">;</span></div>
<div class="ln" style="top:370.48px">13</div><div class="cl" style="top:370.48px"></div>
<div class="ln" style="top:392.32px">14</div><div class="cl" style="top:392.32px"><span class="k">let</span><span class="o"> </span><span class="v">blobs</span><span class="o"> = </span><span class="b1">[]</span><span class="o">;</span></div>
<div class="ln" style="top:414.16px">15</div><div class="cl" style="top:414.16px"><span class="k">let</span><span class="o"> </span><span class="v">bubbles</span><span class="o"> = </span><span class="b1">[]</span><span class="o">;</span></div>
<div class="ln" style="top:436.00px">16</div><div class="cl" style="top:436.00px"><span class="k">let</span><span class="o"> </span><span class="v">ripples</span><span class="o"> = </span><span class="b1">[]</span><span class="o">;</span></div>
<div class="ln" style="top:457.84px">17</div><div class="cl" style="top:457.84px"><span class="k">let</span><span class="o"> </span><span class="v">letterEvents</span><span class="o"> = </span><span class="b1">[]</span><span class="o">;</span></div>
<div class="ln" style="top:479.68px">18</div><div class="cl" style="top:479.68px"><span class="k">let</span><span class="o"> </span><span class="v">currentLetterIndex</span><span class="o"> = </span><span class="n">0</span><span class="o">;</span></div>
<div class="ln" style="top:501.52px">19</div><div class="cl" style="top:501.52px"><span class="k">let</span><span class="o"> </span><span class="v">displayLetters</span><span class="o"> = </span><span class="b1">[]</span><span class="o">;</span></div>
<div class="ln" style="top:523.36px">20</div><div class="cl" style="top:523.36px"><span class="k">let</span><span class="o"> </span><span class="v">fft</span><span class="o">;</span></div>
<div class="ln" style="top:545.20px">21</div><div class="cl" style="top:545.20px"><span class="k">let</span><span class="o"> </span><span class="v">recordAngle</span><span class="o"> = </span><span class="n">0</span><span class="o">;</span></div>
<div class="ln" style="top:567.04px">22</div><div class="cl" style="top:567.04px"></div>
<div class="ln" style="top:588.88px">23</div><div class="cl" style="top:588.88px"><span class="k">function</span><span class="o"> </span><span class="f">preload</span><span class="b1">()</span><span class="o"> </span><span class="b1">{</span></div>
<div class="ln" style="top:610.72px">24</div><div class="cl" style="top:610.72px"><span class="o">  </span><span class="v">sounds</span><span class="b2">[</span><span class="s">&#x27;UP&#x27;</span><span class="b2">]</span><span class="o"> = </span><span class="f">loadSound</span><span class="b2">(</span><span class="s">&#x27;1.mp3&#x27;</span><span class="b2">)</span><span class="o">;</span></div>
<div class="ln" style="top:632.56px">25</div><div class="cl" style="top:632.56px"><span class="o">  </span><span class="v">sounds</span><span class="b2">[</span><span class="s">&#x27;DOWN&#x27;</span><span class="b2">]</span><span class="o"> = </span><span class="f">loadSound</span><span class="b2">(</span><span class="s">&#x27;2.mp3&#x27;</span><span class="b2">)</span><span class="o">;</span></div>
<div class="ln" style="top:654.40px">26</div><div class="cl" style="top:654.40px"><span class="o">  </span><span class="v">sounds</span><span class="b2">[</span><span class="s">&#x27;LEFT&#x27;</span><span class="b2">]</span><span class="o"> = </span><span class="f">loadSound</span><span class="b2">(</span><span class="s">&#x27;3.mp3&#x27;</span><span class="b2">)</span><span class="o">;</span></div>
<div class="ln" style="top:676.24px">27</div><div class="cl" style="top:676.24px"><span class="o">  </span><span class="v">sounds</span><span class="b2">[</span><span class="s">&#x27;RIGHT&#x27;</span><span class="b2">]</span><span class="o"> = </span><span class="f">loadSound</span><span class="b2">(</span><span class="s">&#x27;4.mp3&#x27;</span><span class="b2">)</span><span class="o">;</span></div>
<div class="ln" style="top:698.08px">28</div><div class="cl" style="top:698.08px"><span class="o">  </span><span class="v">sounds</span><span class="b2">[</span><span class="s">&#x27;SPACE&#x27;</span><span class="b2">]</span><span class="o"> = </span><span class="f">loadSound</span><span class="b2">(</span><span class="s">&#x27;5.mp3&#x27;</span><span class="b2">)</span><span class="o">;</span></div>
<div class="ln" style="top:719.92px">29</div><div class="cl" style="top:719.92px"><span class="b1">}</span></div>
<div class="ln" style="top:741.76px">30</div><div class="cl" style="top:741.76px"></div>
<div class="ln" style="top:763.60px">31</div><div class="cl" style="top:763.60px"><span class="k">function</span><span class="o"> </span><span class="f">setup</span><span class="b1">()</span><span class="o"> </span><span class="b1">{</span></div>
<div class="ln" style="top:785.44px">32</div><div class="cl" style="top:785.44px"><span class="o">  </span><span class="f">createCanvas</span><span class="b2">(</span><span class="n">800</span><span class="o">, </span><span class="n">500</span><span class="b2">)</span><span class="o">;</span></div>
<div class="ln" style="top:807.28px">33</div><div class="cl" style="top:807.28px"><span class="o">  </span><span class="f">textSize</span><span class="b2">(</span><span class="n">64</span><span class="b2">)</span><span class="o">;</span></div>
<div class="ln" style="top:829.12px">34</div><div class="cl" style="top:829.12px"><span class="o">  </span><span class="f">textAlign</span><span class="b2">(</span><span class="K">CENTER</span><span class="o">, </span><span class="K">CENTER</span><span class="b2">)</span><span class="o">;</span></div>
<div class="ln" style="top:850.96px">35</div><div class="cl" style="top:850.96px"><span class="o">  </span><span class="v">fft</span><span class="o"> = </span><span class="k">new</span><span class="o"> </span><span class="v">p5</span><span class="o">.</span><span class="f">FFT</span><span class="b2">()</span><span class="o">;</span></div>
<div class="ln" style="top:872.80px">36</div><div class="cl" style="top:872.80px"><span class="o">  </span><span class="v">sounds</span><span class="b2">[</span><span class="s">&#x27;SPACE&#x27;</span><span class="b2">]</span><span class="o">.</span><span class="f">setVolume</span><span class="b2">(</span><span class="n">0.2</span><span class="b2">)</span><span class="o">;</span></div>
<div class="ln" style="top:894.64px">37</div><div class="cl" style="top:894.64px"><span class="b1">}</span></div>
<div class="ln" style="top:916.48px">38</div><div class="cl" style="top:916.48px"></div>
<div class="ln" style="top:938.32px">39</div><div class="cl" style="top:938.32px"><span class="k">function</span><span class="o"> </span><span class="f">draw</span><span class="b1">()</span><span class="o"> </span><span class="b1">{</span></div>
<div class="ln" style="top:960.16px">40</div><div class="cl" style="top:960.16px"><span class="o">  </span><span class="c">if</span><span class="o"> </span><span class="b2">(</span><span class="o">!</span><span class="v">currentKey</span><span class="b2">)</span><span class="o"> </span><span class="c">return</span><span class="o">;</span></div>
<div class="ln" style="top:982.00px">41</div><div class="cl" style="top:982.00px"><span class="o">  </span><span class="k">let</span><span class="o"> </span><span class="v">elapsed</span><span class="o"> = </span><span class="f">millis</span><span class="b2">()</span><span class="o"> - </span><span class="v">effectStart</span><span class="o">;</span></div>
<div class="ln" style="top:1003.84px">42</div><div class="cl" style="top:1003.84px"><span class="o">  </span><span class="c">if</span><span class="o"> </span><span class="b2">(</span><span class="v">elapsed</span><span class="o"> &gt; </span><span class="v">soundDurations</span><span class="b3">[</span><span class="v">currentKey</span><span class="b3">]</span><span class="b2">)</span><span class="o"> </span><span class="b2">{</span></div>
<div class="ln" style="top:1025.68px">43</div><div class="cl" style="top:1025.68px"><span class="o">    </span><span class="c">if</span><span class="o"> </span><span class="b3">(</span><span class="v">currentSound</span><span class="o"> &amp;&amp; </span><span class="v">currentSound</span><span class="o">.</span><span class="f">isPlaying</span><span class="b1">()</span><span class="b3">)</span><span class="o"> </span><span class="v">currentSound</span><span class="o">.</span><span class="f">stop</span><span class="b3">()</span><span class="o">;</span></div>
<div class="ln" style="top:1047.52px">44</div><div class="cl" style="top:1047.52px"><span class="o">    </span><span class="v">currentKey</span><span class="o"> = </span><span class="k">null</span><span class="o">;</span></div>
<div class="ln" style="top:1069.36px">45</div><div class="cl" style="top:1069.36px"><span class="o">    </span><span class="c">return</span><span class="o">;</span></div>
<div class="ln" style="top:1091.20px">46</div><div class="cl" style="top:1091.20px"><span class="o">  </span><span class="b2">}</span></div>
<div class="ln" style="top:1113.04px">47</div><div class="cl" style="top:1113.04px"><span class="o">  </span><span class="f">background</span><span class="b2">(</span><span class="v">currentKey</span><span class="o"> === </span><span class="s">&#x27;SPACE&#x27;</span><span class="o"> ? </span><span class="n">255</span><span class="o"> : </span><span class="n">0</span><span class="b2">)</span><span class="o">;</span></div>
<div class="ln" style="top:1134.88px">48</div><div class="cl" style="top:1134.88px"></div>
<div class="ln" style="top:1156.72px">49</div><div class="cl" style="top:1156.72px"><span class="o">  </span><span class="c">if</span><span class="o"> </span><span class="b2">(</span><span class="v">currentKey</span><span class="o"> === </span><span class="s">&#x27;UP&#x27;</span><span class="b2">)</span><span class="o"> </span><span class="f">drawPouring</span><span class="b2">()</span><span class="o">;</span></div>
<div class="ln" style="top:1178.56px">50</div><div class="cl" style="top:1178.56px"><span class="o">  </span><span class="c">if</span><span class="o"> </span><span class="b2">(</span><span class="v">currentKey</span><span class="o"> === </span><span class="s">&#x27;DOWN&#x27;</span><span class="b2">)</span><span class="o"> </span><span class="f">drawBoiling</span><span class="b2">()</span><span class="o">;</span></div>
<div class="ln" style="top:1200.40px">51</div><div class="cl" style="top:1200.40px"><span class="o">  </span><span class="c">if</span><span class="o"> </span><span class="b2">(</span><span class="v">currentKey</span><span class="o"> === </span><span class="s">&#x27;LEFT&#x27;</span><span class="b2">)</span><span class="o"> </span><span class="f">drawTyping</span><span class="b2">(</span><span class="v">elapsed</span><span class="b2">)</span><span class="o">;</span></div>
<div class="ln" style="top:1222.24px">52</div><div class="cl" style="top:1222.24px"><span class="o">  </span><span class="c">if</span><span class="o"> </span><span class="b2">(</span><span class="v">currentKey</span><span class="o"> === </span><span class="s">&#x27;RIGHT&#x27;</span><span class="b2">)</span><span class="o"> </span><span class="f">drawRipples</span><span class="b2">(</span><span class="v">elapsed</span><span class="b2">)</span><span class="o">;</span></div>
<div class="ln" style="top:1244.08px">53</div><div class="cl" style="top:1244.08px"><span class="o">  </span><span class="c">if</span><span class="o"> </span><span class="b2">(</span><span class="v">currentKey</span><span class="o"> === </span><span class="s">&#x27;SPACE&#x27;</span><span class="b2">)</span><span class="o"> </span><span class="f">drawReferenceStyleRecord</span><span class="b2">()</span><span class="o">;</span></div>
<div class="ln" style="top:1265.92px">54</div><div class="cl" style="top:1265.92px"><span class="b1">}</span></div>
<div class="ln" style="top:1287.76px">55</div><div class="cl" style="top:1287.76px"></div>
<div class="ln" style="top:1309.60px">56</div><div class="cl" style="top:1309.60px"><span class="k">function</span><span class="o"> </span><span class="f">keyPressed</span><span class="b1">()</span><span class="o"> </span><span class="b1">{</span></div>
<div class="ln" style="top:1331.44px">57</div><div class="cl" style="top:1331.44px"><span class="o">  </span><span class="k">let</span><span class="o"> </span><span class="v">keyMap</span><span class="o"> = </span><span class="b2">{</span></div>
<div class="ln" style="top:1353.28px">58</div><div class="cl" style="top:1353.28px"><span class="o">    </span><span class="b3">[</span><span class="K">UP_ARROW</span><span class="b3">]</span><span class="o">: </span><span class="s">&#x27;UP&#x27;</span><span class="o">,</span></div>
<div class="ln" style="top:1375.12px">59</div><div class="cl" style="top:1375.12px"><span class="o">    </span><span class="b3">[</span><span class="K">DOWN_ARROW</span><span class="b3">]</span><span class="o">: </span><span class="s">&#x27;DOWN&#x27;</span><span class="o">,</span></div>
<div class="ln" style="top:1396.96px">60</div><div class="cl" style="top:1396.96px"><span class="o">    </span><span class="b3">[</span><span class="K">LEFT_ARROW</span><span class="b3">]</span><span class="o">: </span><span class="s">&#x27;LEFT&#x27;</span><span class="o">,</span></div></div></div>
</body></html>
